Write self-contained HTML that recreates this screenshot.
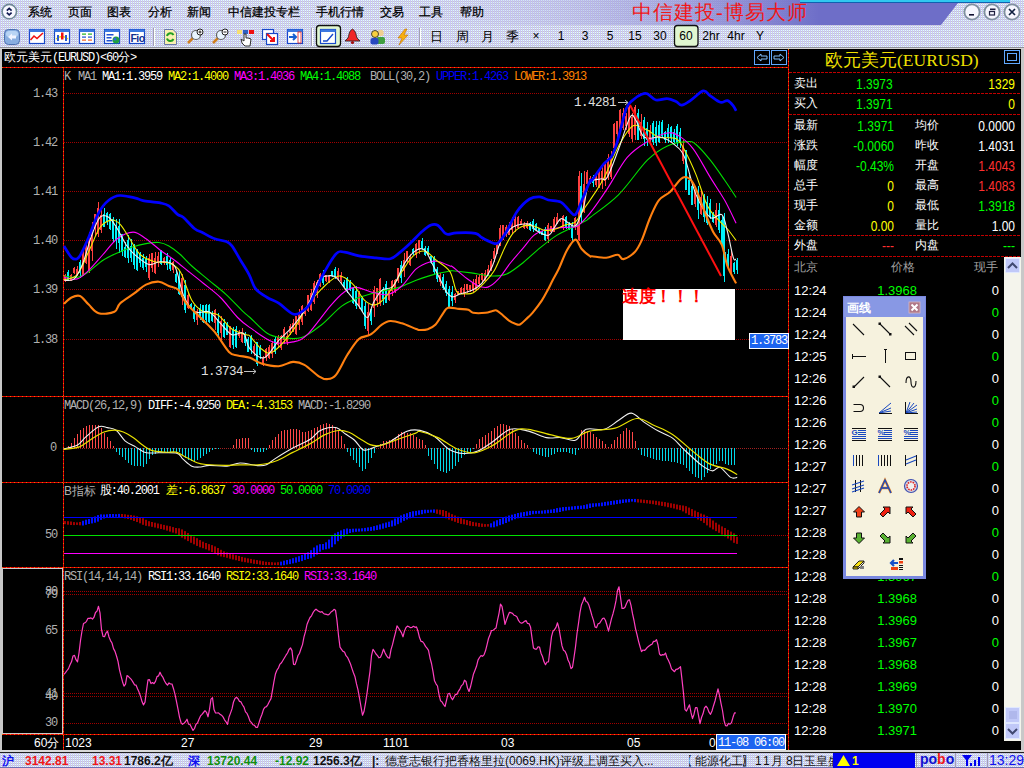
<!DOCTYPE html><html><head><meta charset="utf-8"><style>
*{margin:0;padding:0;box-sizing:border-box}
html,body{width:1024px;height:768px;overflow:hidden;background:#000}
body{position:relative;font-family:"Liberation Sans",sans-serif;font-size:12px;color:#fff}
.a{position:absolute;white-space:nowrap;line-height:1}
.m{font-family:"Liberation Mono",monospace;font-size:12px;letter-spacing:-1.2px}
.s{font-family:"Liberation Sans",sans-serif;font-size:12px}
#menubar{position:absolute;left:0;top:0;width:1024px;height:25px;
 background:linear-gradient(90deg,#d4d4f0 0px,#d4d4f0 400px,#a8a8e0 560px,#8080cc 760px,#7272c4 940px);}
#tb{position:absolute;left:0;top:25px;width:1024px;height:22px;background:#d6d6f2}
</style></head><body>
<svg class="a" style="left:0;top:0" width="1024" height="49"><defs><pattern id="dl" width="2" height="2" patternUnits="userSpaceOnUse"><rect width="2" height="2" fill="#cccaf6"/><rect x="1" y="0" width="1" height="1" fill="#e4fcfc"/><rect x="1" y="1" width="1" height="1" fill="#c4c4cc"/></pattern><pattern id="dk" width="2" height="2" patternUnits="userSpaceOnUse"><rect width="2" height="2" fill="#6e6ec8"/><rect x="1" y="1" width="1" height="1" fill="#5a8cb8"/></pattern><linearGradient id="mg" x1="0" x2="1"><stop offset="0" stop-color="#d2d2f2" stop-opacity="0"/><stop offset="0.38" stop-color="#d2d2f2" stop-opacity="0"/><stop offset="0.8" stop-color="#6e6ec8" stop-opacity="1"/><stop offset="1" stop-color="#6e6ec8" stop-opacity="1"/></linearGradient></defs><rect x="0" y="0" width="1024" height="49" fill="url(#dl)"/><rect x="0" y="0" width="1024" height="25" fill="url(#mg)"/><polygon points="958,3 1010,3 1010,0 1024,0 1024,25 941,25" fill="url(#dl)"/><rect x="800" y="0" width="210" height="2" fill="#30c8f0"/><rect x="800" y="2" width="210" height="1" fill="#1060b0"/><rect x="0" y="47" width="1024" height="1" fill="#909098"/><rect x="0" y="48" width="1024" height="1" fill="#d4d4d4"/></svg>
<div class="a" style="left:28px;top:6px;font-size:12px;color:#000;-webkit-text-stroke:0.25px #000">系统</div>
<div class="a" style="left:68px;top:6px;font-size:12px;color:#000;-webkit-text-stroke:0.25px #000">页面</div>
<div class="a" style="left:107px;top:6px;font-size:12px;color:#000;-webkit-text-stroke:0.25px #000">图表</div>
<div class="a" style="left:148px;top:6px;font-size:12px;color:#000;-webkit-text-stroke:0.25px #000">分析</div>
<div class="a" style="left:187px;top:6px;font-size:12px;color:#000;-webkit-text-stroke:0.25px #000">新闻</div>
<div class="a" style="left:228px;top:6px;font-size:12px;color:#000;-webkit-text-stroke:0.25px #000">中信建投专栏</div>
<div class="a" style="left:316px;top:6px;font-size:12px;color:#000;-webkit-text-stroke:0.25px #000">手机行情</div>
<div class="a" style="left:380px;top:6px;font-size:12px;color:#000;-webkit-text-stroke:0.25px #000">交易</div>
<div class="a" style="left:419px;top:6px;font-size:12px;color:#000;-webkit-text-stroke:0.25px #000">工具</div>
<div class="a" style="left:460px;top:6px;font-size:12px;color:#000;-webkit-text-stroke:0.25px #000">帮助</div>
<div class="a" style="left:632px;top:2px;font-size:20px;color:#f01818;font-family:'Liberation Serif',serif;letter-spacing:1px">中信建投-博易大师</div>
<svg class="a" style="left:0;top:0" width="24" height="24"><circle cx="9.3" cy="11.6" r="7.2" fill="#f8f8ff" stroke="#708898" stroke-width="1.6"/><path d="M6.8,10.6 L9.2,8.4 L11.6,10.6 M6.8,12.6 L9.2,14.8 L11.6,12.6" stroke="#101850" stroke-width="1.7" fill="none"/></svg>
<svg class="a" style="left:0;top:0" width="1024" height="25"><circle cx="972" cy="12" r="7.6" fill="#f6f6fe" stroke="#8090a0" stroke-width="1.8"/><circle cx="992" cy="12" r="7.6" fill="#f6f6fe" stroke="#8090a0" stroke-width="1.8"/><circle cx="1012" cy="12" r="7.6" fill="#f6f6fe" stroke="#8090a0" stroke-width="1.8"/><rect x="969" y="14" width="5" height="1.6" fill="#101030"/><rect x="989.5" y="11.5" width="5" height="3.5" fill="none" stroke="#202040" stroke-width="1.2"/><rect x="990" y="8.5" width="5.5" height="1.6" fill="#202040"/><path d="M1009,9 L1015,15 M1015,9 L1009,15" stroke="#102040" stroke-width="1.7"/></svg>
<svg class="a" style="left:0;top:1px" width="1024" height="48"><g transform="translate(4,28)"><rect x="0.5" y="0.5" width="15" height="15" rx="4" fill="#88aee0" stroke="#4c70b0"/><rect x="2" y="2" width="12" height="6" rx="3" fill="#b8d4f4"/><path d="M4,8 L8,4.5 L8,6.5 L12,6.5 L12,9.5 L8,9.5 L8,11.5 Z" fill="#f0f4ff"/></g><g transform="translate(29,28)"><rect x="0.5" y="0.5" width="15" height="14" fill="#fff" stroke="#1848c8" stroke-width="1.2"/><rect x="0.5" y="0.5" width="15" height="2.5" fill="#3c78e0"/><path d="M1.5,11 L5,7 L8,9.5 L14,4" stroke="#f01010" stroke-width="1.6" fill="none"/></g><g transform="translate(54,28)"><rect x="0.5" y="0.5" width="15" height="14" fill="#fff" stroke="#1848c8" stroke-width="1.2"/><rect x="0.5" y="0.5" width="15" height="2.5" fill="#3c78e0"/><path d="M2,10 Q8,5 14,10" stroke="#f0e000" stroke-width="1.3" fill="none"/><rect x="3" y="6" width="2" height="6" fill="#2c5cd0"/><rect x="7" y="3.5" width="2.5" height="7" fill="#f01010"/><rect x="11" y="6" width="2" height="6" fill="#2c5cd0"/></g><g transform="translate(79,28)"><rect x="0.5" y="0.5" width="15" height="14" fill="#fff" stroke="#1848c8" stroke-width="1.2"/><rect x="0.5" y="0.5" width="15" height="2.5" fill="#3c78e0"/><rect x="3" y="4.5" width="4" height="1.2" fill="#20b020"/><rect x="9" y="4.5" width="4" height="1.2" fill="#20b020"/><rect x="3" y="7.5" width="4" height="1.2" fill="#2050d0"/><rect x="9" y="7.5" width="4" height="1.2" fill="#2050d0"/><rect x="3" y="10.5" width="4" height="1.2" fill="#f06020"/><rect x="9" y="10.5" width="4" height="1.2" fill="#f06020"/></g><g transform="translate(104,28)"><rect x="0.5" y="0.5" width="15" height="14" fill="#fff" stroke="#1848c8" stroke-width="1.2"/><rect x="0.5" y="0.5" width="15" height="2.5" fill="#3c78e0"/><rect x="2.5" y="5" width="7" height="1.5" fill="#2050d0"/><rect x="2.5" y="8" width="5" height="1.5" fill="#2050d0"/><rect x="2.5" y="11" width="6" height="1.5" fill="#2050d0"/><circle cx="12" cy="11" r="3.5" fill="#20a040"/><circle cx="11" cy="10" r="1.5" fill="#3060e0"/></g><g transform="translate(129,28)"><rect x="0.5" y="0.5" width="15" height="14" fill="#fff" stroke="#1848c8" stroke-width="1.2"/><rect x="0.5" y="0.5" width="15" height="2.5" fill="#3c78e0"/><text x="1.5" y="13" font-family="Liberation Sans" font-size="10.5" font-weight="bold" letter-spacing="-0.6" fill="#103090">Fio</text></g><rect x="153" y="27" width="1" height="18" fill="#a0a0b0"/><rect x="154" y="27" width="1" height="18" fill="#ffffff"/><g transform="translate(164,28)"><path d="M0.5,0.5 L9,0.5 L12.5,4 L12.5,15.5 L0.5,15.5 Z" fill="#f8f0b0" stroke="#6878a8"/><path d="M3,7 A3.5,3.5 0 0 1 9.5,6" stroke="#20a020" stroke-width="2" fill="none"/><path d="M9.5,10 A3.5,3.5 0 0 1 3,9.5" stroke="#20a020" stroke-width="2" fill="none"/></g><g transform="translate(187,27)"><path d="M1,15 L6,10" stroke="#d08020" stroke-width="2.5"/><circle cx="9" cy="7" r="4.5" fill="#e8f4ff" stroke="#606060" stroke-width="1.2"/><circle cx="13" cy="4" r="3" fill="#fff" stroke="#202020"/><path d="M11.5,4 L14.5,4 M13,2.5 L13,5.5" stroke="#202020" stroke-width="1"/></g><g transform="translate(212,27)"><path d="M1,15 L6,10" stroke="#d08020" stroke-width="2.5"/><circle cx="9" cy="7" r="4.5" fill="#e8f4ff" stroke="#606060" stroke-width="1.2"/><circle cx="13" cy="4" r="3" fill="#fff" stroke="#202020"/><path d="M11.5,4 L14.5,4" stroke="#202020" stroke-width="1"/></g><g transform="translate(237,27)"><rect x="0" y="2" width="5" height="4" fill="#f8e070"/><rect x="6" y="2" width="5" height="4" fill="#3060c0"/><rect x="12" y="2" width="5" height="4" fill="#f01010"/><path d="M7,6 L7,13 L4,11 L5,15 L8,18 L13,18 L14,11 L11,10 L9,10 L9,6 Z" fill="#fff" stroke="#303030"/></g><g transform="translate(262,28)"><rect x="0.5" y="0.5" width="11" height="10" fill="#fff" stroke="#1848c8" stroke-width="1.2"/><rect x="4.5" y="4.5" width="11" height="11" fill="#fff" stroke="#1848c8" stroke-width="1.2"/><path d="M5,5 L12,12 M8,12 L12,12 L12,8" stroke="#f01010" stroke-width="2" fill="none"/></g><g transform="translate(287,28)"><rect x="0.5" y="0.5" width="15" height="14" fill="#fff" stroke="#1848c8" stroke-width="1.2"/><rect x="0.5" y="0.5" width="15" height="2.5" fill="#3c78e0"/><path d="M2,8 L9,8 M6,5 L9,8 L6,11" stroke="#1860d0" stroke-width="2" fill="none"/><rect x="11" y="3" width="3" height="11" fill="#fff" stroke="#e02020" stroke-width="0.8"/></g><rect x="311" y="27" width="1" height="18" fill="#a0a0b0"/><rect x="312" y="27" width="1" height="18" fill="#ffffff"/><rect x="316.5" y="24.5" width="24" height="21" rx="3" fill="#e0f6d0" stroke="#101010" stroke-width="1.3"/><g transform="translate(320,28)"><rect x="0.5" y="0.5" width="15" height="14" fill="#fff" stroke="#1848c8" stroke-width="1.2"/><rect x="0.5" y="0.5" width="15" height="2.5" fill="#3c78e0"/><path d="M3,12 L7,12 L13,5" stroke="#1848c8" stroke-width="1.4" fill="none"/></g><g transform="translate(345,28)"><path d="M7.5,0 C4,2 4,6 3,9 L0,12 L15,12 L12,9 C11,6 11,2 7.5,0 Z" fill="#f02828" stroke="#202020" stroke-width="0.8"/><circle cx="7.5" cy="13.5" r="1.6" fill="#a01010"/></g><g transform="translate(370,28)"><circle cx="10.5" cy="4" r="3.2" fill="#f0d090"/><rect x="6.5" y="8" width="8.5" height="7" rx="2" fill="#40a040"/><circle cx="5" cy="5" r="3.5" fill="#f8d040" stroke="#202020" stroke-width="0.8"/><rect x="0.5" y="9" width="8" height="6.5" rx="2" fill="#2848c0"/></g><path d="M405,28 L398,37 L402,37 L399,44 L408,34 L404,34 L407,28 Z" fill="#f8b010" stroke="#c07000" stroke-width="0.6"/><rect x="419" y="27" width="1" height="18" fill="#a0a0b0"/><rect x="420" y="27" width="1" height="18" fill="#ffffff"/><rect x="674.5" y="24.5" width="23.5" height="21" rx="3" fill="#e0f6d0" stroke="#101010" stroke-width="1.3"/></svg>
<div class="a" style="left:416px;width:40px;text-align:center;top:30px;font-size:13px;color:#000">日</div>
<div class="a" style="left:442px;width:40px;text-align:center;top:30px;font-size:13px;color:#000">周</div>
<div class="a" style="left:467px;width:40px;text-align:center;top:30px;font-size:13px;color:#000">月</div>
<div class="a" style="left:492px;width:40px;text-align:center;top:30px;font-size:13px;color:#000">季</div>
<div class="a" style="left:516px;width:40px;text-align:center;top:30px;font-size:12px;color:#000">×</div>
<div class="a" style="left:541px;width:40px;text-align:center;top:30px;font-size:12px;color:#000">1</div>
<div class="a" style="left:565px;width:40px;text-align:center;top:30px;font-size:12px;color:#000">3</div>
<div class="a" style="left:590px;width:40px;text-align:center;top:30px;font-size:12px;color:#000">5</div>
<div class="a" style="left:615px;width:40px;text-align:center;top:30px;font-size:12px;color:#000">15</div>
<div class="a" style="left:640px;width:40px;text-align:center;top:30px;font-size:12px;color:#000">30</div>
<div class="a" style="left:666px;width:40px;text-align:center;top:30px;font-size:12px;color:#000">60</div>
<div class="a" style="left:691px;width:40px;text-align:center;top:30px;font-size:12px;color:#000">2hr</div>
<div class="a" style="left:716px;width:40px;text-align:center;top:30px;font-size:12px;color:#000">4hr</div>
<div class="a" style="left:740px;width:40px;text-align:center;top:30px;font-size:12px;color:#000">Y</div>
<svg class="a" style="left:0;top:0" width="1024" height="768"><rect x="0" y="49" width="2" height="703" fill="#c8c8c8"/><rect x="1021" y="49" width="3" height="703" fill="#c8c8c8"/><rect x="0" y="750" width="1024" height="2" fill="#d8d8d8"/><rect x="2" y="67" width="786" height="1" fill="#e00000"/><rect x="2" y="396" width="786" height="1" fill="#e00000"/><rect x="2" y="482" width="786" height="1" fill="#e00000"/><rect x="2" y="567" width="786" height="1" fill="#e00000"/><rect x="2" y="734" width="786" height="1" fill="#e00000"/><rect x="63" y="67" width="1" height="683" fill="#e00000"/><rect x="788" y="49" width="1" height="701" fill="#e00000"/><line x1="2" y1="67.5" x2="788" y2="67.5" stroke="#f07000" stroke-dasharray="1,3"/><line x1="2" y1="396.5" x2="788" y2="396.5" stroke="#f07000" stroke-dasharray="1,3"/><line x1="2" y1="482.5" x2="788" y2="482.5" stroke="#f07000" stroke-dasharray="1,3"/><line x1="2" y1="567.5" x2="788" y2="567.5" stroke="#f07000" stroke-dasharray="1,3"/><line x1="2" y1="734.5" x2="788" y2="734.5" stroke="#f07000" stroke-dasharray="1,3"/><line x1="63.5" y1="67" x2="63.5" y2="750" stroke="#f07000" stroke-dasharray="1,3"/><line x1="788.5" y1="49" x2="788.5" y2="750" stroke="#f07000" stroke-dasharray="1,3"/><line x1="64" y1="93.5" x2="788" y2="93.5" stroke="#a00000" stroke-width="1" stroke-dasharray="1,1"/><line x1="64" y1="142.5" x2="788" y2="142.5" stroke="#a00000" stroke-width="1" stroke-dasharray="1,1"/><line x1="64" y1="191.5" x2="788" y2="191.5" stroke="#a00000" stroke-width="1" stroke-dasharray="1,1"/><line x1="64" y1="240.5" x2="788" y2="240.5" stroke="#a00000" stroke-width="1" stroke-dasharray="1,1"/><line x1="64" y1="289.5" x2="788" y2="289.5" stroke="#a00000" stroke-width="1" stroke-dasharray="1,1"/><line x1="64" y1="339.5" x2="788" y2="339.5" stroke="#a00000" stroke-width="1" stroke-dasharray="1,1"/><line x1="64" y1="448.5" x2="788" y2="448.5" stroke="#a02020" stroke-width="1" stroke-dasharray="1,1"/><line x1="737" y1="535.5" x2="788" y2="535.5" stroke="#a00000" stroke-width="1" stroke-dasharray="1,1"/><line x1="64" y1="591.5" x2="788" y2="591.5" stroke="#a00000" stroke-width="1" stroke-dasharray="1,1"/><line x1="64" y1="594.5" x2="788" y2="594.5" stroke="#a00000" stroke-width="1" stroke-dasharray="1,1"/><line x1="64" y1="630.5" x2="788" y2="630.5" stroke="#a00000" stroke-width="1" stroke-dasharray="1,1"/><line x1="64" y1="693.5" x2="788" y2="693.5" stroke="#a00000" stroke-width="1" stroke-dasharray="1,1"/><line x1="64" y1="696.5" x2="788" y2="696.5" stroke="#a00000" stroke-width="1" stroke-dasharray="1,1"/><line x1="64" y1="723.5" x2="788" y2="723.5" stroke="#a00000" stroke-width="1" stroke-dasharray="1,1"/><rect x="2" y="568" width="60" height="165" fill="none" stroke="#c8c8c8" stroke-width="1" transform="translate(0.5,0.5)"/><line x1="789" y1="72.5" x2="1021" y2="72.5" stroke="#c00000" stroke-dasharray="3,1"/><line x1="789" y1="93.5" x2="1021" y2="93.5" stroke="#c00000" stroke-dasharray="3,1"/><line x1="789" y1="114.5" x2="1021" y2="114.5" stroke="#c00000" stroke-dasharray="3,1"/><line x1="789" y1="235.5" x2="1021" y2="235.5" stroke="#c00000" stroke-dasharray="3,1"/><line x1="789" y1="256.5" x2="1021" y2="256.5" stroke="#c00000" stroke-dasharray="3,1"/><rect x="65" y="274" width="1" height="8" fill="#ff4040"/><rect x="64" y="275" width="2" height="6" fill="#ff4040"/><rect x="68" y="270" width="1" height="10" fill="#00f0f8"/><rect x="67" y="272" width="2" height="8" fill="#00f0f8"/><rect x="71" y="274" width="1" height="7" fill="#ff4040"/><rect x="70" y="275" width="2" height="6" fill="#ff4040"/><rect x="74" y="267" width="1" height="7" fill="#ff4040"/><rect x="73" y="268" width="2" height="5" fill="#ff4040"/><rect x="77" y="266" width="1" height="10" fill="#ff4040"/><rect x="76" y="269" width="2" height="6" fill="#ff4040"/><rect x="80" y="260" width="1" height="18" fill="#00f0f8"/><rect x="79" y="262" width="2" height="11" fill="#00f0f8"/><rect x="83" y="249" width="1" height="27" fill="#ff4040"/><rect x="82" y="252" width="2" height="23" fill="#ff4040"/><rect x="86" y="240" width="1" height="24" fill="#ff4040"/><rect x="85" y="246" width="2" height="17" fill="#ff4040"/><rect x="89" y="232" width="1" height="41" fill="#ff4040"/><rect x="88" y="237" width="2" height="33" fill="#ff4040"/><rect x="92" y="222" width="1" height="39" fill="#ff4040"/><rect x="91" y="233" width="2" height="18" fill="#ff4040"/><rect x="95" y="214" width="1" height="22" fill="#ff4040"/><rect x="94" y="214" width="2" height="15" fill="#ff4040"/><rect x="98" y="202" width="1" height="35" fill="#ff4040"/><rect x="97" y="208" width="2" height="26" fill="#ff4040"/><rect x="101" y="210" width="1" height="23" fill="#ff4040"/><rect x="100" y="215" width="2" height="15" fill="#ff4040"/><rect x="104" y="208" width="1" height="19" fill="#00f0f8"/><rect x="103" y="214" width="2" height="13" fill="#00f0f8"/><rect x="107" y="212" width="1" height="13" fill="#00f0f8"/><rect x="106" y="213" width="2" height="9" fill="#00f0f8"/><rect x="110" y="213" width="1" height="17" fill="#00f0f8"/><rect x="109" y="214" width="2" height="15" fill="#00f0f8"/><rect x="113" y="217" width="1" height="25" fill="#00f0f8"/><rect x="112" y="219" width="2" height="20" fill="#00f0f8"/><rect x="116" y="219" width="1" height="30" fill="#00f0f8"/><rect x="115" y="227" width="2" height="13" fill="#00f0f8"/><rect x="119" y="219" width="1" height="34" fill="#00f0f8"/><rect x="118" y="226" width="2" height="17" fill="#00f0f8"/><rect x="122" y="234" width="1" height="22" fill="#00f0f8"/><rect x="121" y="234" width="2" height="18" fill="#00f0f8"/><rect x="125" y="242" width="1" height="16" fill="#00f0f8"/><rect x="124" y="247" width="2" height="10" fill="#00f0f8"/><rect x="128" y="235" width="1" height="28" fill="#00f0f8"/><rect x="127" y="240" width="2" height="18" fill="#00f0f8"/><rect x="131" y="239" width="1" height="23" fill="#00f0f8"/><rect x="130" y="246" width="2" height="12" fill="#00f0f8"/><rect x="134" y="244" width="1" height="25" fill="#00f0f8"/><rect x="133" y="245" width="2" height="20" fill="#00f0f8"/><rect x="137" y="249" width="1" height="22" fill="#00f0f8"/><rect x="136" y="250" width="2" height="20" fill="#00f0f8"/><rect x="140" y="252" width="1" height="15" fill="#00f0f8"/><rect x="139" y="254" width="2" height="9" fill="#00f0f8"/><rect x="143" y="254" width="1" height="16" fill="#00f0f8"/><rect x="142" y="258" width="2" height="10" fill="#00f0f8"/><rect x="146" y="256" width="1" height="16" fill="#00f0f8"/><rect x="145" y="259" width="2" height="8" fill="#00f0f8"/><rect x="149" y="254" width="1" height="26" fill="#ff4040"/><rect x="148" y="258" width="2" height="20" fill="#ff4040"/><rect x="152" y="253" width="1" height="19" fill="#ff4040"/><rect x="151" y="253" width="2" height="15" fill="#ff4040"/><rect x="155" y="252" width="1" height="22" fill="#ff4040"/><rect x="154" y="258" width="2" height="15" fill="#ff4040"/><rect x="158" y="252" width="1" height="15" fill="#ff4040"/><rect x="157" y="256" width="2" height="7" fill="#ff4040"/><rect x="161" y="250" width="1" height="15" fill="#00f0f8"/><rect x="160" y="251" width="2" height="13" fill="#00f0f8"/><rect x="164" y="257" width="1" height="8" fill="#ff4040"/><rect x="163" y="258" width="2" height="5" fill="#ff4040"/><rect x="167" y="253" width="1" height="17" fill="#00f0f8"/><rect x="166" y="256" width="2" height="9" fill="#00f0f8"/><rect x="170" y="258" width="1" height="13" fill="#00f0f8"/><rect x="169" y="260" width="2" height="9" fill="#00f0f8"/><rect x="173" y="261" width="1" height="12" fill="#ff4040"/><rect x="172" y="262" width="2" height="8" fill="#ff4040"/><rect x="176" y="271" width="1" height="12" fill="#00f0f8"/><rect x="175" y="274" width="2" height="8" fill="#00f0f8"/><rect x="179" y="271" width="1" height="24" fill="#00f0f8"/><rect x="178" y="277" width="2" height="17" fill="#00f0f8"/><rect x="182" y="274" width="1" height="31" fill="#ff4040"/><rect x="181" y="278" width="2" height="19" fill="#ff4040"/><rect x="185" y="280" width="1" height="33" fill="#00f0f8"/><rect x="184" y="285" width="2" height="25" fill="#00f0f8"/><rect x="188" y="293" width="1" height="16" fill="#ff4040"/><rect x="187" y="295" width="2" height="13" fill="#ff4040"/><rect x="191" y="303" width="1" height="7" fill="#00f0f8"/><rect x="190" y="304" width="2" height="5" fill="#00f0f8"/><rect x="194" y="305" width="1" height="17" fill="#00f0f8"/><rect x="193" y="307" width="2" height="12" fill="#00f0f8"/><rect x="197" y="309" width="1" height="16" fill="#ff4040"/><rect x="196" y="311" width="2" height="9" fill="#ff4040"/><rect x="200" y="304" width="1" height="16" fill="#00f0f8"/><rect x="199" y="308" width="2" height="9" fill="#00f0f8"/><rect x="203" y="305" width="1" height="18" fill="#00f0f8"/><rect x="202" y="305" width="2" height="17" fill="#00f0f8"/><rect x="206" y="304" width="1" height="19" fill="#00f0f8"/><rect x="205" y="305" width="2" height="15" fill="#00f0f8"/><rect x="209" y="304" width="1" height="19" fill="#00f0f8"/><rect x="208" y="305" width="2" height="17" fill="#00f0f8"/><rect x="212" y="311" width="1" height="11" fill="#00f0f8"/><rect x="211" y="314" width="2" height="7" fill="#00f0f8"/><rect x="215" y="309" width="1" height="21" fill="#ff4040"/><rect x="214" y="310" width="2" height="13" fill="#ff4040"/><rect x="218" y="313" width="1" height="23" fill="#00f0f8"/><rect x="217" y="319" width="2" height="14" fill="#00f0f8"/><rect x="221" y="316" width="1" height="24" fill="#ff4040"/><rect x="220" y="321" width="2" height="12" fill="#ff4040"/><rect x="224" y="319" width="1" height="19" fill="#00f0f8"/><rect x="223" y="323" width="2" height="14" fill="#00f0f8"/><rect x="227" y="322" width="1" height="13" fill="#00f0f8"/><rect x="226" y="324" width="2" height="11" fill="#00f0f8"/><rect x="230" y="326" width="1" height="22" fill="#ff4040"/><rect x="229" y="326" width="2" height="21" fill="#ff4040"/><rect x="233" y="327" width="1" height="22" fill="#00f0f8"/><rect x="232" y="330" width="2" height="15" fill="#00f0f8"/><rect x="236" y="326" width="1" height="22" fill="#00f0f8"/><rect x="235" y="329" width="2" height="18" fill="#00f0f8"/><rect x="239" y="330" width="1" height="8" fill="#ff4040"/><rect x="238" y="332" width="2" height="4" fill="#ff4040"/><rect x="242" y="328" width="1" height="15" fill="#ff4040"/><rect x="241" y="332" width="2" height="10" fill="#ff4040"/><rect x="245" y="332" width="1" height="14" fill="#00f0f8"/><rect x="244" y="336" width="2" height="7" fill="#00f0f8"/><rect x="248" y="337" width="1" height="15" fill="#00f0f8"/><rect x="247" y="339" width="2" height="13" fill="#00f0f8"/><rect x="251" y="335" width="1" height="19" fill="#00f0f8"/><rect x="250" y="337" width="2" height="13" fill="#00f0f8"/><rect x="254" y="344" width="1" height="12" fill="#ff4040"/><rect x="253" y="346" width="2" height="7" fill="#ff4040"/><rect x="257" y="342" width="1" height="24" fill="#00f0f8"/><rect x="256" y="342" width="2" height="22" fill="#00f0f8"/><rect x="260" y="345" width="1" height="14" fill="#00f0f8"/><rect x="259" y="347" width="2" height="8" fill="#00f0f8"/><rect x="263" y="356" width="1" height="10" fill="#ff4040"/><rect x="262" y="358" width="2" height="7" fill="#ff4040"/><rect x="266" y="348" width="1" height="13" fill="#ff4040"/><rect x="265" y="349" width="2" height="9" fill="#ff4040"/><rect x="269" y="345" width="1" height="14" fill="#ff4040"/><rect x="268" y="347" width="2" height="11" fill="#ff4040"/><rect x="272" y="341" width="1" height="17" fill="#ff4040"/><rect x="271" y="343" width="2" height="11" fill="#ff4040"/><rect x="275" y="337" width="1" height="17" fill="#00f0f8"/><rect x="274" y="339" width="2" height="13" fill="#00f0f8"/><rect x="278" y="335" width="1" height="13" fill="#ff4040"/><rect x="277" y="337" width="2" height="8" fill="#ff4040"/><rect x="281" y="335" width="1" height="15" fill="#ff4040"/><rect x="280" y="336" width="2" height="12" fill="#ff4040"/><rect x="284" y="327" width="1" height="17" fill="#ff4040"/><rect x="283" y="329" width="2" height="11" fill="#ff4040"/><rect x="287" y="333" width="1" height="12" fill="#ff4040"/><rect x="286" y="336" width="2" height="6" fill="#ff4040"/><rect x="290" y="324" width="1" height="11" fill="#ff4040"/><rect x="289" y="326" width="2" height="7" fill="#ff4040"/><rect x="293" y="319" width="1" height="13" fill="#ff4040"/><rect x="292" y="323" width="2" height="9" fill="#ff4040"/><rect x="296" y="316" width="1" height="19" fill="#ff4040"/><rect x="295" y="316" width="2" height="18" fill="#ff4040"/><rect x="299" y="309" width="1" height="21" fill="#ff4040"/><rect x="298" y="314" width="2" height="11" fill="#ff4040"/><rect x="302" y="305" width="1" height="20" fill="#ff4040"/><rect x="301" y="306" width="2" height="16" fill="#ff4040"/><rect x="305" y="308" width="1" height="8" fill="#ff4040"/><rect x="304" y="308" width="2" height="6" fill="#ff4040"/><rect x="308" y="295" width="1" height="17" fill="#ff4040"/><rect x="307" y="295" width="2" height="16" fill="#ff4040"/><rect x="311" y="289" width="1" height="22" fill="#ff4040"/><rect x="310" y="293" width="2" height="17" fill="#ff4040"/><rect x="314" y="281" width="1" height="23" fill="#ff4040"/><rect x="313" y="283" width="2" height="19" fill="#ff4040"/><rect x="317" y="280" width="1" height="18" fill="#ff4040"/><rect x="316" y="282" width="2" height="11" fill="#ff4040"/><rect x="320" y="273" width="1" height="14" fill="#ff4040"/><rect x="319" y="274" width="2" height="12" fill="#ff4040"/><rect x="323" y="270" width="1" height="15" fill="#00f0f8"/><rect x="322" y="274" width="2" height="9" fill="#00f0f8"/><rect x="326" y="275" width="1" height="7" fill="#ff4040"/><rect x="325" y="275" width="2" height="6" fill="#ff4040"/><rect x="329" y="275" width="1" height="8" fill="#ff4040"/><rect x="328" y="276" width="2" height="6" fill="#ff4040"/><rect x="332" y="271" width="1" height="6" fill="#00f0f8"/><rect x="331" y="271" width="2" height="5" fill="#00f0f8"/><rect x="335" y="267" width="1" height="12" fill="#00f0f8"/><rect x="334" y="269" width="2" height="7" fill="#00f0f8"/><rect x="338" y="268" width="1" height="13" fill="#ff4040"/><rect x="337" y="271" width="2" height="7" fill="#ff4040"/><rect x="341" y="272" width="1" height="12" fill="#ff4040"/><rect x="340" y="275" width="2" height="6" fill="#ff4040"/><rect x="344" y="280" width="1" height="7" fill="#00f0f8"/><rect x="343" y="282" width="2" height="4" fill="#00f0f8"/><rect x="347" y="277" width="1" height="16" fill="#00f0f8"/><rect x="346" y="278" width="2" height="13" fill="#00f0f8"/><rect x="350" y="280" width="1" height="11" fill="#00f0f8"/><rect x="349" y="282" width="2" height="8" fill="#00f0f8"/><rect x="353" y="287" width="1" height="17" fill="#00f0f8"/><rect x="352" y="288" width="2" height="15" fill="#00f0f8"/><rect x="356" y="286" width="1" height="23" fill="#00f0f8"/><rect x="355" y="291" width="2" height="15" fill="#00f0f8"/><rect x="359" y="291" width="1" height="18" fill="#ff4040"/><rect x="358" y="293" width="2" height="13" fill="#ff4040"/><rect x="362" y="296" width="1" height="16" fill="#00f0f8"/><rect x="361" y="298" width="2" height="12" fill="#00f0f8"/><rect x="365" y="302" width="1" height="27" fill="#00f0f8"/><rect x="364" y="306" width="2" height="20" fill="#00f0f8"/><rect x="368" y="304" width="1" height="32" fill="#ff4040"/><rect x="367" y="312" width="2" height="19" fill="#ff4040"/><rect x="371" y="309" width="1" height="16" fill="#00f0f8"/><rect x="370" y="309" width="2" height="12" fill="#00f0f8"/><rect x="374" y="286" width="1" height="31" fill="#ff4040"/><rect x="373" y="290" width="2" height="18" fill="#ff4040"/><rect x="377" y="288" width="1" height="19" fill="#ff4040"/><rect x="376" y="288" width="2" height="13" fill="#ff4040"/><rect x="380" y="278" width="1" height="28" fill="#ff4040"/><rect x="379" y="279" width="2" height="25" fill="#ff4040"/><rect x="383" y="287" width="1" height="18" fill="#00f0f8"/><rect x="382" y="289" width="2" height="10" fill="#00f0f8"/><rect x="386" y="281" width="1" height="22" fill="#00f0f8"/><rect x="385" y="284" width="2" height="19" fill="#00f0f8"/><rect x="389" y="288" width="1" height="13" fill="#ff4040"/><rect x="388" y="290" width="2" height="10" fill="#ff4040"/><rect x="392" y="280" width="1" height="16" fill="#ff4040"/><rect x="391" y="281" width="2" height="10" fill="#ff4040"/><rect x="395" y="279" width="1" height="14" fill="#ff4040"/><rect x="394" y="280" width="2" height="11" fill="#ff4040"/><rect x="398" y="268" width="1" height="15" fill="#ff4040"/><rect x="397" y="268" width="2" height="13" fill="#ff4040"/><rect x="401" y="261" width="1" height="22" fill="#00f0f8"/><rect x="400" y="265" width="2" height="13" fill="#00f0f8"/><rect x="404" y="253" width="1" height="24" fill="#ff4040"/><rect x="403" y="260" width="2" height="11" fill="#ff4040"/><rect x="407" y="251" width="1" height="12" fill="#ff4040"/><rect x="406" y="251" width="2" height="10" fill="#ff4040"/><rect x="410" y="254" width="1" height="12" fill="#ff4040"/><rect x="409" y="258" width="2" height="7" fill="#ff4040"/><rect x="413" y="248" width="1" height="7" fill="#00f0f8"/><rect x="412" y="249" width="2" height="4" fill="#00f0f8"/><rect x="416" y="243" width="1" height="15" fill="#ff4040"/><rect x="415" y="244" width="2" height="11" fill="#ff4040"/><rect x="419" y="240" width="1" height="14" fill="#ff4040"/><rect x="418" y="240" width="2" height="10" fill="#ff4040"/><rect x="422" y="238" width="1" height="12" fill="#00f0f8"/><rect x="421" y="241" width="2" height="7" fill="#00f0f8"/><rect x="425" y="246" width="1" height="10" fill="#00f0f8"/><rect x="424" y="248" width="2" height="7" fill="#00f0f8"/><rect x="428" y="246" width="1" height="9" fill="#00f0f8"/><rect x="427" y="248" width="2" height="6" fill="#00f0f8"/><rect x="431" y="256" width="1" height="8" fill="#00f0f8"/><rect x="430" y="256" width="2" height="7" fill="#00f0f8"/><rect x="434" y="256" width="1" height="19" fill="#00f0f8"/><rect x="433" y="258" width="2" height="14" fill="#00f0f8"/><rect x="437" y="267" width="1" height="15" fill="#00f0f8"/><rect x="436" y="269" width="2" height="10" fill="#00f0f8"/><rect x="440" y="273" width="1" height="13" fill="#ff4040"/><rect x="439" y="275" width="2" height="7" fill="#ff4040"/><rect x="443" y="274" width="1" height="16" fill="#00f0f8"/><rect x="442" y="277" width="2" height="11" fill="#00f0f8"/><rect x="446" y="281" width="1" height="15" fill="#00f0f8"/><rect x="445" y="284" width="2" height="9" fill="#00f0f8"/><rect x="449" y="286" width="1" height="22" fill="#00f0f8"/><rect x="448" y="289" width="2" height="19" fill="#00f0f8"/><rect x="452" y="286" width="1" height="20" fill="#00f0f8"/><rect x="451" y="292" width="2" height="9" fill="#00f0f8"/><rect x="455" y="293" width="1" height="10" fill="#ff4040"/><rect x="454" y="294" width="2" height="6" fill="#ff4040"/><rect x="458" y="291" width="1" height="4" fill="#ff4040"/><rect x="457" y="291" width="2" height="4" fill="#ff4040"/><rect x="461" y="287" width="1" height="6" fill="#ff4040"/><rect x="460" y="288" width="2" height="5" fill="#ff4040"/><rect x="464" y="284" width="1" height="13" fill="#ff4040"/><rect x="463" y="288" width="2" height="6" fill="#ff4040"/><rect x="467" y="284" width="1" height="9" fill="#ff4040"/><rect x="466" y="284" width="2" height="6" fill="#ff4040"/><rect x="470" y="285" width="1" height="7" fill="#ff4040"/><rect x="469" y="285" width="2" height="5" fill="#ff4040"/><rect x="473" y="279" width="1" height="14" fill="#ff4040"/><rect x="472" y="283" width="2" height="7" fill="#ff4040"/><rect x="476" y="275" width="1" height="15" fill="#ff4040"/><rect x="475" y="279" width="2" height="11" fill="#ff4040"/><rect x="479" y="274" width="1" height="12" fill="#ff4040"/><rect x="478" y="277" width="2" height="7" fill="#ff4040"/><rect x="482" y="273" width="1" height="10" fill="#ff4040"/><rect x="481" y="273" width="2" height="7" fill="#ff4040"/><rect x="485" y="270" width="1" height="10" fill="#ff4040"/><rect x="484" y="273" width="2" height="8" fill="#ff4040"/><rect x="488" y="265" width="1" height="11" fill="#ff4040"/><rect x="487" y="269" width="2" height="7" fill="#ff4040"/><rect x="491" y="259" width="1" height="12" fill="#ff4040"/><rect x="490" y="261" width="2" height="8" fill="#ff4040"/><rect x="494" y="248" width="1" height="14" fill="#ff4040"/><rect x="493" y="251" width="2" height="8" fill="#ff4040"/><rect x="497" y="242" width="1" height="12" fill="#ff4040"/><rect x="496" y="243" width="2" height="10" fill="#ff4040"/><rect x="500" y="225" width="1" height="21" fill="#ff4040"/><rect x="499" y="228" width="2" height="18" fill="#ff4040"/><rect x="503" y="225" width="1" height="15" fill="#ff4040"/><rect x="502" y="225" width="2" height="12" fill="#ff4040"/><rect x="506" y="225" width="1" height="12" fill="#ff4040"/><rect x="505" y="227" width="2" height="8" fill="#ff4040"/><rect x="509" y="222" width="1" height="13" fill="#ff4040"/><rect x="508" y="225" width="2" height="10" fill="#ff4040"/><rect x="512" y="217" width="1" height="17" fill="#ff4040"/><rect x="511" y="221" width="2" height="9" fill="#ff4040"/><rect x="515" y="215" width="1" height="17" fill="#ff4040"/><rect x="514" y="219" width="2" height="8" fill="#ff4040"/><rect x="518" y="216" width="1" height="13" fill="#ff4040"/><rect x="517" y="217" width="2" height="11" fill="#ff4040"/><rect x="521" y="219" width="1" height="6" fill="#ff4040"/><rect x="520" y="221" width="2" height="4" fill="#ff4040"/><rect x="524" y="222" width="1" height="7" fill="#ff4040"/><rect x="523" y="224" width="2" height="4" fill="#ff4040"/><rect x="527" y="221" width="1" height="8" fill="#ff4040"/><rect x="526" y="223" width="2" height="5" fill="#ff4040"/><rect x="530" y="222" width="1" height="9" fill="#00f0f8"/><rect x="529" y="223" width="2" height="7" fill="#00f0f8"/><rect x="533" y="219" width="1" height="13" fill="#00f0f8"/><rect x="532" y="221" width="2" height="8" fill="#00f0f8"/><rect x="536" y="223" width="1" height="8" fill="#00f0f8"/><rect x="535" y="224" width="2" height="6" fill="#00f0f8"/><rect x="539" y="228" width="1" height="6" fill="#00f0f8"/><rect x="538" y="228" width="2" height="5" fill="#00f0f8"/><rect x="542" y="231" width="1" height="4" fill="#00f0f8"/><rect x="541" y="232" width="2" height="3" fill="#00f0f8"/><rect x="545" y="227" width="1" height="14" fill="#00f0f8"/><rect x="544" y="229" width="2" height="11" fill="#00f0f8"/><rect x="548" y="223" width="1" height="20" fill="#ff4040"/><rect x="547" y="225" width="2" height="14" fill="#ff4040"/><rect x="551" y="226" width="1" height="7" fill="#ff4040"/><rect x="550" y="226" width="2" height="6" fill="#ff4040"/><rect x="554" y="217" width="1" height="15" fill="#ff4040"/><rect x="553" y="219" width="2" height="13" fill="#ff4040"/><rect x="557" y="213" width="1" height="11" fill="#ff4040"/><rect x="556" y="217" width="2" height="7" fill="#ff4040"/><rect x="560" y="219" width="1" height="3" fill="#ff4040"/><rect x="559" y="220" width="2" height="1" fill="#ff4040"/><rect x="563" y="215" width="1" height="15" fill="#ff4040"/><rect x="562" y="216" width="2" height="11" fill="#ff4040"/><rect x="566" y="216" width="1" height="13" fill="#00f0f8"/><rect x="565" y="217" width="2" height="11" fill="#00f0f8"/><rect x="569" y="222" width="1" height="8" fill="#00f0f8"/><rect x="568" y="224" width="2" height="5" fill="#00f0f8"/><rect x="572" y="222" width="1" height="19" fill="#00f0f8"/><rect x="571" y="225" width="2" height="13" fill="#00f0f8"/><rect x="575" y="217" width="1" height="13" fill="#ff4040"/><rect x="574" y="218" width="2" height="9" fill="#ff4040"/><rect x="578" y="216" width="1" height="24" fill="#ff4040"/><rect x="577" y="223" width="2" height="12" fill="#ff4040"/><rect x="581" y="173" width="1" height="50" fill="#00f0f8"/><rect x="580" y="186" width="2" height="31" fill="#00f0f8"/><rect x="584" y="171" width="1" height="42" fill="#ff4040"/><rect x="583" y="184" width="2" height="28" fill="#ff4040"/><rect x="587" y="170" width="1" height="15" fill="#ff4040"/><rect x="586" y="172" width="2" height="12" fill="#ff4040"/><rect x="590" y="176" width="1" height="8" fill="#ff4040"/><rect x="589" y="178" width="2" height="4" fill="#ff4040"/><rect x="593" y="175" width="1" height="12" fill="#00f0f8"/><rect x="592" y="177" width="2" height="6" fill="#00f0f8"/><rect x="596" y="174" width="1" height="13" fill="#ff4040"/><rect x="595" y="177" width="2" height="8" fill="#ff4040"/><rect x="599" y="169" width="1" height="19" fill="#ff4040"/><rect x="598" y="170" width="2" height="18" fill="#ff4040"/><rect x="602" y="165" width="1" height="24" fill="#ff4040"/><rect x="601" y="171" width="2" height="11" fill="#ff4040"/><rect x="605" y="161" width="1" height="25" fill="#ff4040"/><rect x="604" y="163" width="2" height="18" fill="#ff4040"/><rect x="608" y="154" width="1" height="26" fill="#ff4040"/><rect x="607" y="158" width="2" height="18" fill="#ff4040"/><rect x="611" y="151" width="1" height="28" fill="#ff4040"/><rect x="610" y="157" width="2" height="20" fill="#ff4040"/><rect x="614" y="123" width="1" height="32" fill="#ff4040"/><rect x="613" y="124" width="2" height="24" fill="#ff4040"/><rect x="617" y="121" width="1" height="17" fill="#ff4040"/><rect x="616" y="121" width="2" height="13" fill="#ff4040"/><rect x="620" y="109" width="1" height="22" fill="#ff4040"/><rect x="619" y="110" width="2" height="19" fill="#ff4040"/><rect x="623" y="108" width="1" height="22" fill="#ff4040"/><rect x="622" y="113" width="2" height="15" fill="#ff4040"/><rect x="626" y="113" width="1" height="17" fill="#ff4040"/><rect x="625" y="116" width="2" height="10" fill="#ff4040"/><rect x="629" y="106" width="1" height="31" fill="#ff4040"/><rect x="628" y="107" width="2" height="27" fill="#ff4040"/><rect x="632" y="113" width="1" height="29" fill="#ff4040"/><rect x="631" y="117" width="2" height="22" fill="#ff4040"/><rect x="635" y="105" width="1" height="35" fill="#ff4040"/><rect x="634" y="107" width="2" height="28" fill="#ff4040"/><rect x="638" y="109" width="1" height="31" fill="#00f0f8"/><rect x="637" y="113" width="2" height="27" fill="#00f0f8"/><rect x="641" y="114" width="1" height="25" fill="#ff4040"/><rect x="640" y="122" width="2" height="14" fill="#ff4040"/><rect x="644" y="117" width="1" height="29" fill="#00f0f8"/><rect x="643" y="120" width="2" height="19" fill="#00f0f8"/><rect x="647" y="122" width="1" height="24" fill="#00f0f8"/><rect x="646" y="128" width="2" height="12" fill="#00f0f8"/><rect x="650" y="125" width="1" height="20" fill="#ff4040"/><rect x="649" y="130" width="2" height="13" fill="#ff4040"/><rect x="653" y="121" width="1" height="24" fill="#00f0f8"/><rect x="652" y="123" width="2" height="19" fill="#00f0f8"/><rect x="656" y="121" width="1" height="25" fill="#00f0f8"/><rect x="655" y="127" width="2" height="16" fill="#00f0f8"/><rect x="659" y="121" width="1" height="22" fill="#00f0f8"/><rect x="658" y="125" width="2" height="17" fill="#00f0f8"/><rect x="662" y="120" width="1" height="18" fill="#00f0f8"/><rect x="661" y="122" width="2" height="14" fill="#00f0f8"/><rect x="665" y="131" width="1" height="12" fill="#00f0f8"/><rect x="664" y="132" width="2" height="8" fill="#00f0f8"/><rect x="668" y="124" width="1" height="19" fill="#00f0f8"/><rect x="667" y="128" width="2" height="10" fill="#00f0f8"/><rect x="671" y="126" width="1" height="16" fill="#00f0f8"/><rect x="670" y="127" width="2" height="11" fill="#00f0f8"/><rect x="674" y="129" width="1" height="15" fill="#00f0f8"/><rect x="673" y="132" width="2" height="10" fill="#00f0f8"/><rect x="677" y="124" width="1" height="22" fill="#00f0f8"/><rect x="676" y="126" width="2" height="17" fill="#00f0f8"/><rect x="680" y="128" width="1" height="20" fill="#00f0f8"/><rect x="679" y="132" width="2" height="11" fill="#00f0f8"/><rect x="683" y="140" width="1" height="24" fill="#ff4040"/><rect x="682" y="147" width="2" height="14" fill="#ff4040"/><rect x="686" y="151" width="1" height="39" fill="#ff4040"/><rect x="685" y="158" width="2" height="20" fill="#ff4040"/><rect x="689" y="175" width="1" height="20" fill="#00f0f8"/><rect x="688" y="180" width="2" height="15" fill="#00f0f8"/><rect x="692" y="181" width="1" height="24" fill="#00f0f8"/><rect x="691" y="186" width="2" height="19" fill="#00f0f8"/><rect x="695" y="186" width="1" height="21" fill="#ff4040"/><rect x="694" y="191" width="2" height="13" fill="#ff4040"/><rect x="698" y="186" width="1" height="33" fill="#00f0f8"/><rect x="697" y="194" width="2" height="16" fill="#00f0f8"/><rect x="701" y="191" width="1" height="24" fill="#ff4040"/><rect x="700" y="197" width="2" height="17" fill="#ff4040"/><rect x="704" y="194" width="1" height="28" fill="#00f0f8"/><rect x="703" y="196" width="2" height="21" fill="#00f0f8"/><rect x="707" y="196" width="1" height="29" fill="#00f0f8"/><rect x="706" y="202" width="2" height="21" fill="#00f0f8"/><rect x="710" y="199" width="1" height="20" fill="#00f0f8"/><rect x="709" y="203" width="2" height="14" fill="#00f0f8"/><rect x="713" y="212" width="1" height="11" fill="#00f0f8"/><rect x="712" y="213" width="2" height="9" fill="#00f0f8"/><rect x="716" y="203" width="1" height="24" fill="#ff4040"/><rect x="715" y="210" width="2" height="15" fill="#ff4040"/><rect x="719" y="203" width="1" height="30" fill="#00f0f8"/><rect x="718" y="210" width="2" height="20" fill="#00f0f8"/><rect x="722" y="216" width="1" height="32" fill="#00f0f8"/><rect x="721" y="220" width="2" height="25" fill="#00f0f8"/><rect x="725" y="252" width="1" height="9" fill="#00f0f8"/><rect x="724" y="253" width="2" height="7" fill="#00f0f8"/><rect x="728" y="249" width="1" height="20" fill="#00f0f8"/><rect x="727" y="254" width="2" height="11" fill="#00f0f8"/><rect x="731" y="251" width="1" height="25" fill="#ff4040"/><rect x="730" y="256" width="2" height="17" fill="#ff4040"/><rect x="734" y="262" width="1" height="12" fill="#00f0f8"/><rect x="733" y="263" width="2" height="9" fill="#00f0f8"/><rect x="737" y="258" width="1" height="16" fill="#00f0f8"/><rect x="736" y="260" width="2" height="10" fill="#00f0f8"/><rect x="579" y="171" width="1" height="70" fill="#ff4040"/><rect x="578" y="176" width="2" height="62" fill="#ff4040"/><rect x="724" y="213" width="1" height="69" fill="#00f0f8"/><rect x="723" y="218" width="2" height="58" fill="#00f0f8"/><rect x="685" y="150" width="2" height="40" fill="#00f0f8"/><path d="M64.3,276.0 C66.5,276.2 73.1,278.1 77.2,277.4 C81.3,276.7 84.4,274.6 88.7,271.7 C93.0,268.8 98.2,263.3 103.0,260.2 C107.8,257.1 112.5,255.2 117.3,253.1 C122.1,250.9 126.8,248.9 131.6,247.3 C136.4,245.7 141.4,244.4 146.0,243.6 C150.6,242.8 155.1,242.1 158.9,242.5 C162.7,242.9 165.3,243.9 168.9,245.9 C172.5,247.9 176.5,251.2 180.3,254.5 C184.1,257.9 187.0,261.7 191.8,266.0 C196.6,270.3 203.3,275.5 209.0,280.3 C214.7,285.1 220.5,289.4 226.2,294.6 C231.9,299.9 239.4,308.0 243.4,311.8 C247.4,315.6 246.0,313.9 250.0,317.5 C254.0,321.1 261.9,329.9 267.2,333.3 C272.4,336.7 275.8,336.9 281.5,337.6 C287.2,338.3 294.9,339.8 301.6,337.6 C308.3,335.5 314.9,329.9 321.6,324.7 C328.3,319.4 335.5,310.6 341.7,306.1 C347.9,301.6 352.7,299.9 358.9,297.5 C365.1,295.1 372.2,293.4 378.9,291.7 C385.6,290.0 392.8,289.3 399.0,287.4 C405.2,285.5 410.5,282.4 416.2,280.3 C421.9,278.2 427.8,276.1 433.4,274.6 C439.0,273.1 446.8,271.7 450.0,271.1 C453.2,270.5 449.0,270.5 452.5,270.8 C456.0,271.1 464.6,272.0 471.2,272.9 C477.9,273.8 486.2,275.8 492.1,276.0 C498.0,276.2 501.5,276.2 506.7,274.0 C511.9,271.8 517.8,266.9 523.3,262.5 C528.8,258.1 534.4,252.4 540.0,247.9 C545.6,243.4 551.5,238.7 556.7,235.4 C561.9,232.1 566.4,230.5 571.2,228.1 C576.1,225.7 582.7,222.6 585.8,220.8 C588.9,219.0 584.5,221.9 590.0,217.5 C595.5,213.1 609.2,204.2 618.7,194.6 C628.2,185.0 639.2,168.3 647.3,160.2 C655.4,152.1 660.7,149.0 667.4,145.9 C674.1,142.8 682.6,141.8 687.4,141.6 C692.2,141.4 692.2,141.4 696.0,144.5 C699.8,147.6 705.5,154.2 710.3,160.2 C715.1,166.2 720.4,174.1 724.7,180.3 C729.0,186.5 734.2,194.6 736.1,197.5" stroke="#00e000" stroke-width="1.1" fill="none" stroke-linejoin="round"/><path d="M64.3,277.4 C66.5,277.6 73.1,280.1 77.2,278.9 C81.3,277.7 84.4,274.4 88.7,270.3 C93.0,266.2 98.2,259.8 103.0,254.5 C107.8,249.2 112.3,242.4 117.3,238.7 C122.3,235.0 128.3,232.1 133.1,232.1 C137.9,232.1 141.5,235.7 146.0,238.7 C150.5,241.7 155.5,246.6 160.3,250.2 C165.1,253.8 169.8,256.6 174.6,260.2 C179.4,263.8 184.1,267.9 188.9,271.7 C193.7,275.5 198.0,278.9 203.3,283.2 C208.6,287.5 214.8,291.8 220.5,297.5 C226.2,303.2 232.7,312.5 237.6,317.5 C242.5,322.5 244.1,323.5 250.0,327.6 C255.9,331.7 265.7,339.5 272.9,341.9 C280.1,344.3 287.3,343.1 293.0,341.9 C298.7,340.7 301.1,340.7 307.3,334.7 C313.5,328.7 324.0,313.3 330.2,306.1 C336.4,298.9 340.3,294.8 344.6,291.7 C348.9,288.6 351.7,287.4 356.0,287.4 C360.3,287.4 365.1,290.5 370.3,291.7 C375.6,292.9 382.2,295.6 387.5,294.6 C392.8,293.7 397.1,290.3 401.9,286.0 C406.7,281.7 411.4,272.9 416.2,268.8 C421.0,264.8 426.7,262.9 430.5,261.7 C434.3,260.5 435.9,261.0 439.1,261.7 C442.4,262.4 447.8,265.2 450.0,266.0 C452.2,266.8 450.0,264.8 452.5,266.7 C455.0,268.6 460.8,274.0 465.0,277.1 C469.2,280.2 473.7,283.7 477.5,285.4 C481.3,287.1 484.4,288.1 487.9,287.1 C491.4,286.1 494.5,283.3 498.3,279.2 C502.1,275.1 506.6,267.7 510.8,262.5 C515.0,257.3 519.5,252.4 523.3,247.9 C527.1,243.4 530.3,238.4 533.8,235.4 C537.2,232.4 540.4,231.4 544.2,230.2 C548.0,229.0 552.5,228.6 556.7,228.1 C560.9,227.6 565.7,227.4 569.2,227.1 C572.7,226.8 574.0,228.3 577.5,226.0 C581.0,223.7 585.0,219.4 590.0,213.2 C595.0,207.0 601.0,198.2 607.2,188.9 C613.4,179.6 620.5,165.3 627.2,157.4 C633.9,149.5 640.6,145.7 647.3,141.6 C654.0,137.5 662.1,133.9 667.4,133.0 C672.6,132.1 674.5,133.3 678.8,135.9 C683.1,138.5 688.0,141.9 693.2,148.8 C698.5,155.7 705.0,168.8 710.3,177.4 C715.5,186.0 720.4,192.7 724.7,200.3 C729.0,208.0 734.2,219.5 736.1,223.3" stroke="#ff00ff" stroke-width="1.1" fill="none" stroke-linejoin="round"/><path d="M64.3,279.7 C66.5,278.9 73.1,279.3 77.2,274.6 C81.3,269.9 84.9,259.5 88.7,251.6 C92.5,243.7 96.3,232.6 100.1,227.3 C103.9,222.1 108.2,220.6 111.6,220.1 C114.9,219.6 117.3,221.5 120.2,224.4 C123.1,227.3 125.5,232.3 128.8,237.3 C132.1,242.3 135.9,250.4 140.2,254.5 C144.5,258.6 149.8,260.3 154.6,261.7 C159.4,263.1 164.6,261.4 168.9,263.1 C173.2,264.8 176.5,265.5 180.3,271.7 C184.1,277.9 188.0,293.6 191.8,300.3 C195.6,307.0 199.0,309.4 203.3,311.8 C207.6,314.2 212.8,311.8 217.6,314.7 C222.4,317.6 227.1,325.7 231.9,329.0 C236.7,332.3 243.2,333.5 246.2,334.7 C249.2,335.9 247.4,333.8 250.0,336.2 C252.6,338.6 257.7,346.4 261.5,349.0 C265.3,351.6 267.6,355.0 272.9,351.9 C278.1,348.8 287.3,338.0 293.0,330.4 C298.7,322.8 302.5,313.0 307.3,306.1 C312.1,299.2 316.4,293.9 321.6,288.9 C326.9,283.9 333.5,276.7 338.8,276.0 C344.1,275.3 348.9,280.6 353.2,284.6 C357.5,288.7 360.8,297.0 364.6,300.3 C368.4,303.6 372.3,305.6 376.1,304.6 C379.9,303.7 383.2,300.1 387.5,294.6 C391.8,289.1 397.6,278.1 401.9,271.7 C406.2,265.2 409.5,259.3 413.3,255.9 C417.1,252.5 421.0,250.4 424.8,251.1 C428.6,251.8 432.0,256.8 436.2,260.2 C440.4,263.6 446.6,266.4 450.0,271.7 C453.4,276.9 454.2,288.0 456.7,291.7 C459.2,295.4 462.2,293.6 465.0,293.8 C467.8,293.9 470.2,294.4 473.3,292.7 C476.4,291.0 480.3,286.9 483.8,283.3 C487.2,279.7 490.7,276.7 494.2,270.8 C497.7,264.9 501.5,254.2 504.6,247.9 C507.7,241.7 509.8,237.0 512.9,233.3 C516.0,229.7 519.8,227.2 523.3,226.0 C526.8,224.8 530.3,225.3 533.8,226.0 C537.2,226.7 540.7,229.7 544.2,230.2 C547.7,230.7 551.1,230.1 554.6,229.2 C558.1,228.3 561.5,226.2 565.0,225.0 C568.5,223.8 571.9,225.0 575.4,221.9 C578.9,218.8 583.4,209.8 585.8,206.2 C588.2,202.7 586.9,205.1 590.0,200.3 C593.1,195.5 599.5,186.5 604.3,177.4 C609.1,168.3 613.9,154.5 618.7,145.9 C623.5,137.3 628.2,128.4 633.0,125.8 C637.8,123.2 643.0,128.2 647.3,130.1 C651.6,132.0 654.0,135.9 658.8,137.3 C663.6,138.7 671.7,136.5 676.0,138.7 C680.3,140.8 681.3,144.2 684.6,150.2 C687.9,156.2 692.2,165.3 696.0,174.6 C699.8,183.9 703.7,198.5 707.5,206.1 C711.3,213.7 715.6,216.6 718.9,220.4 C722.2,224.2 724.6,225.7 727.5,229.0 C730.4,232.3 734.7,238.6 736.1,240.5" stroke="#f0f000" stroke-width="1.1" fill="none" stroke-linejoin="round"/><path d="M64.3,280.3 C66.0,280.1 71.2,281.8 74.3,278.9 C77.4,276.0 80.0,270.3 82.9,263.1 C85.8,255.9 88.6,243.6 91.5,235.9 C94.4,228.2 97.2,220.3 100.1,217.2 C103.0,214.1 105.8,215.3 108.7,217.2 C111.6,219.1 114.4,224.1 117.3,228.7 C120.2,233.2 123.0,240.2 125.9,244.5 C128.8,248.8 130.7,251.2 134.5,254.5 C138.3,257.8 144.5,263.3 148.8,264.5 C153.1,265.7 156.0,261.4 160.3,261.7 C164.6,261.9 170.8,260.5 174.6,266.0 C178.4,271.5 179.8,287.0 183.2,294.6 C186.5,302.2 190.4,308.9 194.7,311.8 C199.0,314.7 204.7,309.9 209.0,311.8 C213.3,313.7 216.7,319.5 220.5,323.3 C224.3,327.1 228.1,333.0 231.9,334.7 C235.7,336.4 240.4,330.9 243.4,333.3 C246.4,335.7 246.5,344.9 250.0,349.0 C253.5,353.1 259.5,359.1 264.3,357.7 C269.1,356.3 273.9,345.8 278.7,340.5 C283.5,335.2 288.2,331.8 293.0,326.1 C297.8,320.4 303.0,313.7 307.3,306.1 C311.6,298.5 315.5,285.3 318.8,280.3 C322.1,275.3 324.5,276.5 327.4,276.0 C330.3,275.5 332.7,274.8 336.0,277.4 C339.3,280.0 343.6,286.9 347.4,291.7 C351.2,296.5 355.5,301.8 358.9,306.1 C362.2,310.4 365.1,318.0 367.5,317.5 C369.9,317.0 370.8,307.7 373.2,303.2 C375.6,298.7 378.4,293.2 381.8,290.3 C385.2,287.4 389.5,290.5 393.3,286.0 C397.1,281.5 400.9,269.1 404.7,263.1 C408.5,257.1 412.8,252.3 416.2,250.2 C419.6,248.0 421.9,247.6 424.8,250.2 C427.7,252.8 430.1,259.6 433.4,266.0 C436.7,272.4 442.7,284.6 444.8,288.9 C446.9,293.2 445.0,290.4 446.2,291.7 C447.5,293.0 450.1,296.6 452.5,296.9 C454.9,297.2 457.7,294.8 460.8,293.8 C463.9,292.7 467.8,292.3 471.2,290.6 C474.7,288.9 478.2,287.3 481.7,283.3 C485.2,279.3 489.0,273.6 492.1,266.7 C495.2,259.8 498.0,247.3 500.4,241.7 C502.8,236.1 504.6,235.7 506.7,233.3 C508.8,230.9 510.1,228.7 512.9,227.1 C515.7,225.5 520.2,224.3 523.3,224.0 C526.4,223.7 529.6,224.0 531.7,225.0 C533.8,226.0 533.0,228.5 535.8,230.2 C538.6,231.9 545.2,235.9 548.3,235.4 C551.4,234.9 552.5,229.9 554.6,227.1 C556.7,224.3 558.7,219.6 560.8,218.8 C562.9,217.9 565.0,220.7 567.1,221.9 C569.2,223.1 571.6,225.8 573.3,226.0 C575.0,226.2 575.8,226.2 577.5,222.9 C579.2,219.6 581.8,212.9 583.8,206.2 C585.7,199.6 586.2,187.8 589.0,183.2 C591.8,178.6 597.5,179.9 600.5,178.9 C603.5,177.9 604.2,182.4 607.2,177.4 C610.2,172.4 614.9,158.8 618.7,148.8 C622.5,138.8 627.2,122.0 630.1,117.2 C633.0,112.4 633.4,116.8 635.8,120.1 C638.2,123.4 640.1,134.4 644.4,137.3 C648.7,140.2 656.3,135.9 661.6,137.3 C666.9,138.7 672.2,142.6 676.0,145.9 C679.8,149.2 681.3,149.3 684.6,157.4 C687.9,165.5 691.7,184.6 696.0,194.6 C700.3,204.6 706.0,214.2 710.3,217.5 C714.6,220.8 718.9,212.3 721.8,214.7 C724.7,217.1 725.6,224.7 727.5,231.9 C729.4,239.1 731.9,253.2 733.3,257.7 C734.7,262.2 735.6,258.9 736.1,259.1" stroke="#f0f0f0" stroke-width="1.1" fill="none" stroke-linejoin="round"/><path d="M64.0,246.0 C65.2,247.9 69.3,255.3 71.5,257.4 C73.7,259.5 75.5,259.5 77.2,258.8 C78.9,258.1 79.6,256.6 81.5,253.0 C83.4,249.4 86.1,243.5 88.7,237.3 C91.3,231.1 94.4,221.5 97.2,215.8 C100.0,210.1 102.5,206.2 105.8,202.9 C109.1,199.6 113.5,196.9 117.3,195.8 C121.1,194.8 125.5,196.1 128.8,196.6 C132.2,197.1 135.0,197.9 137.4,198.6 C139.8,199.3 139.2,199.9 143.0,200.6 C146.8,201.3 156.0,202.0 160.3,202.9 C164.6,203.8 166.0,203.9 168.9,205.8 C171.8,207.7 175.1,212.5 177.5,214.4 C179.9,216.3 180.3,214.8 183.2,217.2 C186.1,219.6 191.3,226.1 194.7,228.7 C198.0,231.3 200.0,231.3 203.3,233.0 C206.6,234.7 210.9,237.3 214.7,238.7 C218.5,240.1 223.3,240.4 226.2,241.6 C229.1,242.8 229.5,242.8 231.9,245.9 C234.3,249.0 237.6,255.4 240.5,260.2 C243.4,265.0 246.6,269.8 249.1,274.6 C251.6,279.4 252.7,285.1 255.7,288.9 C258.7,292.7 263.4,295.1 267.2,297.5 C271.0,299.9 274.4,300.4 278.7,303.2 C283.0,306.0 289.2,312.7 293.0,314.1 C296.8,315.5 298.7,313.6 301.6,311.8 C304.5,310.0 306.9,308.9 310.2,303.2 C313.5,297.5 317.3,285.6 321.6,277.4 C325.9,269.2 332.2,258.1 336.0,253.9 C339.8,249.7 340.8,251.9 344.6,252.2 C348.4,252.5 353.6,255.0 358.9,255.9 C364.1,256.9 370.9,257.4 376.1,257.9 C381.4,258.4 386.6,259.6 390.4,258.8 C394.2,258.0 395.6,255.7 399.0,253.1 C402.4,250.5 406.7,246.6 410.5,243.0 C414.3,239.4 418.7,234.5 422.0,231.6 C425.3,228.7 427.9,226.4 430.5,225.3 C433.1,224.2 435.3,224.0 437.7,225.3 C440.1,226.6 443.0,231.5 444.8,233.0 C446.6,234.5 446.3,234.4 448.3,234.4 C450.3,234.4 452.2,233.1 456.7,232.9 C461.2,232.7 471.2,232.5 475.4,233.3 C479.6,234.1 478.9,235.9 481.7,237.5 C484.5,239.1 489.3,241.8 492.1,242.7 C494.9,243.6 495.9,244.6 498.3,242.7 C500.7,240.8 503.6,236.4 506.7,231.2 C509.8,226.1 513.3,216.9 517.1,211.5 C520.9,206.1 525.8,201.4 529.6,199.0 C533.4,196.6 536.9,196.7 540.0,196.9 C543.1,197.1 544.8,199.1 548.3,200.0 C551.8,200.9 557.3,200.4 560.8,202.1 C564.3,203.8 566.8,208.3 569.2,210.4 C571.6,212.5 573.3,216.2 575.4,214.6 C577.5,213.0 579.3,206.6 581.7,201.0 C584.1,195.4 588.3,184.7 590.0,181.2 C591.7,177.8 589.7,183.1 591.9,180.3 C594.1,177.5 600.0,168.6 603.3,164.5 C606.6,160.4 609.5,160.0 611.9,155.9 C614.3,151.8 615.3,148.1 617.7,140.2 C620.1,132.3 623.7,115.4 626.2,108.7 C628.8,102.0 630.4,102.4 633.0,100.0 C635.6,97.6 639.2,95.3 641.6,94.3 C644.0,93.3 644.9,92.8 647.3,93.8 C649.7,94.8 652.5,99.2 655.9,100.0 C659.2,100.8 664.0,98.3 667.4,98.6 C670.8,98.8 673.6,100.4 676.0,101.5 C678.4,102.6 679.3,105.4 681.7,105.2 C684.1,105.0 686.7,103.0 690.3,100.6 C693.9,98.2 699.9,91.7 703.2,90.9 C706.5,90.1 707.4,93.9 710.3,95.8 C713.2,97.7 717.5,101.5 720.4,102.3 C723.3,103.1 725.4,100.0 727.5,100.6 C729.6,101.2 731.9,104.1 733.3,105.8 C734.7,107.5 735.6,110.1 736.1,110.9" stroke="#0000ff" stroke-width="2.7" fill="none" stroke-linejoin="round"/><path d="M64.0,303.8 C65.2,302.8 68.8,298.8 71.5,297.5 C74.2,296.2 77.1,294.8 80.0,296.0 C82.9,297.2 85.6,301.7 88.7,304.6 C91.8,307.5 94.4,312.0 98.7,313.2 C103.0,314.4 110.8,313.5 114.4,311.8 C118.0,310.1 116.9,306.3 120.2,303.2 C123.5,300.1 130.2,296.3 134.5,293.2 C138.8,290.1 141.9,286.5 146.0,284.6 C150.1,282.7 155.1,281.5 158.9,281.7 C162.7,281.9 165.6,284.6 168.9,286.0 C172.2,287.4 176.0,287.4 178.9,290.3 C181.8,293.2 182.5,298.7 186.1,303.2 C189.7,307.7 195.6,312.7 200.4,317.5 C205.2,322.3 209.9,326.2 214.7,331.9 C219.5,337.6 225.2,348.0 229.0,351.9 C232.8,355.8 234.1,354.4 237.6,355.4 C241.1,356.4 246.0,356.4 250.0,357.7 C254.0,359.0 256.7,362.0 261.5,363.4 C266.3,364.8 273.4,366.4 278.7,366.2 C283.9,365.9 288.7,362.1 293.0,361.9 C297.3,361.7 300.1,362.4 304.4,364.8 C308.7,367.2 315.0,373.9 318.8,376.3 C322.6,378.7 324.5,379.4 327.4,379.1 C330.3,378.9 332.7,378.9 336.0,374.8 C339.3,370.8 343.6,360.8 347.4,354.8 C351.2,348.8 355.1,342.4 358.9,339.0 C362.7,335.6 366.5,337.1 370.3,334.7 C374.1,332.3 378.5,327.0 381.8,324.7 C385.1,322.4 387.0,321.2 390.4,321.0 C393.8,320.8 397.6,322.0 401.9,323.3 C406.2,324.6 413.2,327.9 416.2,329.0 C419.2,330.1 418.1,330.0 420.0,330.0 C421.9,330.0 425.2,330.1 427.8,329.2 C430.4,328.3 433.0,327.2 435.6,324.5 C438.2,321.8 441.3,315.6 443.4,312.8 C445.5,310.0 445.5,308.5 448.1,307.8 C450.7,307.1 455.6,308.6 459.0,308.9 C462.4,309.2 466.0,309.0 468.4,309.7 C470.8,310.4 470.2,312.3 473.1,312.8 C476.0,313.3 482.5,313.1 485.6,312.8 C488.7,312.5 490.1,311.6 491.9,311.2 C493.7,310.9 494.8,309.8 496.6,310.5 C498.4,311.2 500.7,313.5 502.8,315.2 C504.9,316.9 506.9,319.2 509.0,320.6 C511.1,322.0 513.5,323.1 515.3,323.8 C517.1,324.4 518.2,325.3 520.0,324.5 C521.8,323.7 524.2,320.9 526.2,319.0 C528.3,317.1 529.9,315.9 532.5,312.8 C535.1,309.7 539.3,304.2 541.9,300.3 C544.5,296.4 546.3,292.8 548.1,289.4 C549.9,286.0 551.0,283.4 552.8,280.0 C554.6,276.6 556.4,273.8 558.8,268.8 C561.1,263.8 564.3,254.9 567.1,250.0 C569.9,245.1 573.0,239.8 575.4,239.6 C577.8,239.4 579.3,246.2 581.7,249.0 C584.1,251.8 588.3,255.1 590.0,256.2 C591.7,257.4 589.2,256.0 591.9,256.2 C594.6,256.4 601.9,257.9 606.2,257.7 C610.5,257.5 614.8,254.6 617.7,254.8 C620.6,255.0 620.5,259.6 623.4,259.1 C626.2,258.6 631.8,255.1 634.8,252.0 C637.8,248.9 639.0,246.2 641.6,240.5 C644.2,234.8 647.3,224.2 650.2,217.5 C653.1,210.8 655.5,204.6 658.8,200.3 C662.1,196.0 666.2,195.5 670.2,191.7 C674.2,187.9 679.3,178.8 683.1,177.4 C686.9,176.0 689.6,177.5 693.2,183.2 C696.8,188.9 701.3,203.7 704.6,211.8 C707.9,219.9 710.3,226.4 713.2,231.9 C716.1,237.4 719.4,239.1 721.8,244.8 C724.2,250.5 725.1,259.8 727.5,266.2 C729.9,272.6 734.7,280.5 736.1,283.4" stroke="#ff8010" stroke-width="2.1" fill="none" stroke-linejoin="round"/><line x1="630" y1="105" x2="721" y2="276" stroke="#ff1010" stroke-width="2"/><path d="M618,102.5 L628,102.5 M625,100 L628,102.5 L625,105" stroke="#c0c0c0" stroke-width="1" fill="none"/><path d="M244,371.5 L256,371.5 M253,369 L256,371.5 L253,374" stroke="#c0c0c0" stroke-width="1" fill="none"/><rect x="68" y="446" width="1" height="2" fill="#ff4848"/><rect x="71" y="443" width="1" height="5" fill="#ff4848"/><rect x="74" y="438" width="1" height="10" fill="#ff4848"/><rect x="77" y="434" width="1" height="14" fill="#ff4848"/><rect x="80" y="430" width="1" height="18" fill="#ff4848"/><rect x="83" y="428" width="1" height="20" fill="#ff4848"/><rect x="86" y="426" width="1" height="22" fill="#ff4848"/><rect x="89" y="425" width="1" height="23" fill="#ff4848"/><rect x="92" y="425" width="1" height="23" fill="#ff4848"/><rect x="95" y="425" width="1" height="23" fill="#ff4848"/><rect x="98" y="425" width="1" height="23" fill="#ff4848"/><rect x="101" y="428" width="1" height="20" fill="#ff4848"/><rect x="104" y="433" width="1" height="15" fill="#ff4848"/><rect x="107" y="437" width="1" height="11" fill="#ff4848"/><rect x="110" y="441" width="1" height="7" fill="#ff4848"/><rect x="113" y="446" width="1" height="2" fill="#ff4848"/><rect x="116" y="448" width="1" height="4" fill="#00d8e8"/><rect x="119" y="448" width="1" height="7" fill="#00d8e8"/><rect x="122" y="448" width="1" height="9" fill="#00d8e8"/><rect x="125" y="448" width="1" height="12" fill="#00d8e8"/><rect x="128" y="448" width="1" height="15" fill="#00d8e8"/><rect x="131" y="448" width="1" height="17" fill="#00d8e8"/><rect x="134" y="448" width="1" height="18" fill="#00d8e8"/><rect x="137" y="448" width="1" height="18" fill="#00d8e8"/><rect x="140" y="448" width="1" height="18" fill="#00d8e8"/><rect x="143" y="448" width="1" height="19" fill="#00d8e8"/><rect x="146" y="448" width="1" height="16" fill="#00d8e8"/><rect x="149" y="448" width="1" height="11" fill="#00d8e8"/><rect x="152" y="448" width="1" height="7" fill="#00d8e8"/><rect x="155" y="448" width="1" height="6" fill="#00d8e8"/><rect x="158" y="448" width="1" height="5" fill="#00d8e8"/><rect x="161" y="448" width="1" height="4" fill="#00d8e8"/><rect x="164" y="448" width="1" height="4" fill="#00d8e8"/><rect x="167" y="448" width="1" height="4" fill="#00d8e8"/><rect x="170" y="448" width="1" height="4" fill="#00d8e8"/><rect x="173" y="448" width="1" height="4" fill="#00d8e8"/><rect x="176" y="448" width="1" height="4" fill="#00d8e8"/><rect x="179" y="448" width="1" height="4" fill="#00d8e8"/><rect x="182" y="448" width="1" height="7" fill="#00d8e8"/><rect x="185" y="448" width="1" height="10" fill="#00d8e8"/><rect x="188" y="448" width="1" height="12" fill="#00d8e8"/><rect x="191" y="448" width="1" height="13" fill="#00d8e8"/><rect x="194" y="448" width="1" height="14" fill="#00d8e8"/><rect x="197" y="448" width="1" height="12" fill="#00d8e8"/><rect x="200" y="448" width="1" height="10" fill="#00d8e8"/><rect x="203" y="448" width="1" height="8" fill="#00d8e8"/><rect x="206" y="448" width="1" height="6" fill="#00d8e8"/><rect x="209" y="448" width="1" height="4" fill="#00d8e8"/><rect x="212" y="448" width="1" height="2" fill="#00d8e8"/><rect x="215" y="448" width="1" height="1" fill="#00d8e8"/><rect x="218" y="448" width="1" height="1" fill="#00d8e8"/><rect x="233" y="445" width="1" height="3" fill="#ff4848"/><rect x="236" y="439" width="1" height="9" fill="#ff4848"/><rect x="239" y="439" width="1" height="9" fill="#ff4848"/><rect x="242" y="438" width="1" height="10" fill="#ff4848"/><rect x="245" y="438" width="1" height="10" fill="#ff4848"/><rect x="248" y="438" width="1" height="10" fill="#ff4848"/><rect x="251" y="448" width="1" height="2" fill="#00d8e8"/><rect x="254" y="448" width="1" height="4" fill="#00d8e8"/><rect x="257" y="448" width="1" height="4" fill="#00d8e8"/><rect x="260" y="448" width="1" height="4" fill="#00d8e8"/><rect x="263" y="448" width="1" height="4" fill="#00d8e8"/><rect x="266" y="448" width="1" height="2" fill="#00d8e8"/><rect x="269" y="445" width="1" height="3" fill="#ff4848"/><rect x="272" y="440" width="1" height="8" fill="#ff4848"/><rect x="275" y="437" width="1" height="11" fill="#ff4848"/><rect x="278" y="434" width="1" height="14" fill="#ff4848"/><rect x="281" y="431" width="1" height="17" fill="#ff4848"/><rect x="284" y="430" width="1" height="18" fill="#ff4848"/><rect x="287" y="430" width="1" height="18" fill="#ff4848"/><rect x="290" y="429" width="1" height="19" fill="#ff4848"/><rect x="293" y="429" width="1" height="19" fill="#ff4848"/><rect x="296" y="429" width="1" height="19" fill="#ff4848"/><rect x="299" y="430" width="1" height="18" fill="#ff4848"/><rect x="302" y="432" width="1" height="16" fill="#ff4848"/><rect x="305" y="432" width="1" height="16" fill="#ff4848"/><rect x="308" y="431" width="1" height="17" fill="#ff4848"/><rect x="311" y="430" width="1" height="18" fill="#ff4848"/><rect x="314" y="428" width="1" height="20" fill="#ff4848"/><rect x="317" y="427" width="1" height="21" fill="#ff4848"/><rect x="320" y="425" width="1" height="23" fill="#ff4848"/><rect x="323" y="424" width="1" height="24" fill="#ff4848"/><rect x="326" y="423" width="1" height="25" fill="#ff4848"/><rect x="329" y="424" width="1" height="24" fill="#ff4848"/><rect x="332" y="425" width="1" height="23" fill="#ff4848"/><rect x="335" y="427" width="1" height="21" fill="#ff4848"/><rect x="338" y="431" width="1" height="17" fill="#ff4848"/><rect x="341" y="436" width="1" height="12" fill="#ff4848"/><rect x="344" y="444" width="1" height="4" fill="#ff4848"/><rect x="347" y="448" width="1" height="4" fill="#00d8e8"/><rect x="350" y="448" width="1" height="8" fill="#00d8e8"/><rect x="353" y="448" width="1" height="12" fill="#00d8e8"/><rect x="356" y="448" width="1" height="15" fill="#00d8e8"/><rect x="359" y="448" width="1" height="19" fill="#00d8e8"/><rect x="362" y="448" width="1" height="23" fill="#00d8e8"/><rect x="365" y="448" width="1" height="21" fill="#00d8e8"/><rect x="368" y="448" width="1" height="15" fill="#00d8e8"/><rect x="371" y="448" width="1" height="10" fill="#00d8e8"/><rect x="374" y="448" width="1" height="5" fill="#00d8e8"/><rect x="380" y="444" width="1" height="4" fill="#ff4848"/><rect x="383" y="441" width="1" height="7" fill="#ff4848"/><rect x="386" y="441" width="1" height="7" fill="#ff4848"/><rect x="389" y="440" width="1" height="8" fill="#ff4848"/><rect x="392" y="439" width="1" height="9" fill="#ff4848"/><rect x="395" y="438" width="1" height="10" fill="#ff4848"/><rect x="398" y="434" width="1" height="14" fill="#ff4848"/><rect x="401" y="432" width="1" height="16" fill="#ff4848"/><rect x="404" y="432" width="1" height="16" fill="#ff4848"/><rect x="407" y="433" width="1" height="15" fill="#ff4848"/><rect x="410" y="433" width="1" height="15" fill="#ff4848"/><rect x="413" y="435" width="1" height="13" fill="#ff4848"/><rect x="416" y="437" width="1" height="11" fill="#ff4848"/><rect x="419" y="439" width="1" height="9" fill="#ff4848"/><rect x="422" y="440" width="1" height="8" fill="#ff4848"/><rect x="425" y="445" width="1" height="3" fill="#ff4848"/><rect x="428" y="448" width="1" height="8" fill="#00d8e8"/><rect x="431" y="448" width="1" height="12" fill="#00d8e8"/><rect x="434" y="448" width="1" height="16" fill="#00d8e8"/><rect x="437" y="448" width="1" height="21" fill="#00d8e8"/><rect x="440" y="448" width="1" height="23" fill="#00d8e8"/><rect x="443" y="448" width="1" height="24" fill="#00d8e8"/><rect x="446" y="448" width="1" height="25" fill="#00d8e8"/><rect x="449" y="448" width="1" height="23" fill="#00d8e8"/><rect x="452" y="448" width="1" height="21" fill="#00d8e8"/><rect x="455" y="448" width="1" height="18" fill="#00d8e8"/><rect x="458" y="448" width="1" height="14" fill="#00d8e8"/><rect x="461" y="448" width="1" height="10" fill="#00d8e8"/><rect x="464" y="448" width="1" height="7" fill="#00d8e8"/><rect x="467" y="448" width="1" height="5" fill="#00d8e8"/><rect x="470" y="448" width="1" height="4" fill="#00d8e8"/><rect x="473" y="448" width="1" height="1" fill="#00d8e8"/><rect x="476" y="444" width="1" height="4" fill="#ff4848"/><rect x="479" y="439" width="1" height="9" fill="#ff4848"/><rect x="482" y="437" width="1" height="11" fill="#ff4848"/><rect x="485" y="435" width="1" height="13" fill="#ff4848"/><rect x="488" y="433" width="1" height="15" fill="#ff4848"/><rect x="491" y="431" width="1" height="17" fill="#ff4848"/><rect x="494" y="428" width="1" height="20" fill="#ff4848"/><rect x="497" y="426" width="1" height="22" fill="#ff4848"/><rect x="500" y="424" width="1" height="24" fill="#ff4848"/><rect x="503" y="424" width="1" height="24" fill="#ff4848"/><rect x="506" y="425" width="1" height="23" fill="#ff4848"/><rect x="509" y="426" width="1" height="22" fill="#ff4848"/><rect x="512" y="429" width="1" height="19" fill="#ff4848"/><rect x="515" y="433" width="1" height="15" fill="#ff4848"/><rect x="518" y="436" width="1" height="12" fill="#ff4848"/><rect x="521" y="440" width="1" height="8" fill="#ff4848"/><rect x="524" y="443" width="1" height="5" fill="#ff4848"/><rect x="527" y="445" width="1" height="3" fill="#ff4848"/><rect x="533" y="448" width="1" height="4" fill="#00d8e8"/><rect x="536" y="448" width="1" height="6" fill="#00d8e8"/><rect x="539" y="448" width="1" height="7" fill="#00d8e8"/><rect x="542" y="448" width="1" height="8" fill="#00d8e8"/><rect x="545" y="448" width="1" height="9" fill="#00d8e8"/><rect x="548" y="448" width="1" height="9" fill="#00d8e8"/><rect x="551" y="448" width="1" height="7" fill="#00d8e8"/><rect x="554" y="448" width="1" height="6" fill="#00d8e8"/><rect x="557" y="448" width="1" height="4" fill="#00d8e8"/><rect x="560" y="448" width="1" height="4" fill="#00d8e8"/><rect x="563" y="448" width="1" height="4" fill="#00d8e8"/><rect x="566" y="448" width="1" height="4" fill="#00d8e8"/><rect x="569" y="448" width="1" height="5" fill="#00d8e8"/><rect x="572" y="448" width="1" height="6" fill="#00d8e8"/><rect x="575" y="448" width="1" height="7" fill="#00d8e8"/><rect x="578" y="448" width="1" height="2" fill="#00d8e8"/><rect x="581" y="430" width="1" height="18" fill="#ff4848"/><rect x="584" y="431" width="1" height="17" fill="#ff4848"/><rect x="587" y="431" width="1" height="17" fill="#ff4848"/><rect x="590" y="432" width="1" height="16" fill="#ff4848"/><rect x="593" y="434" width="1" height="14" fill="#ff4848"/><rect x="596" y="437" width="1" height="11" fill="#ff4848"/><rect x="599" y="439" width="1" height="9" fill="#ff4848"/><rect x="602" y="441" width="1" height="7" fill="#ff4848"/><rect x="605" y="444" width="1" height="4" fill="#ff4848"/><rect x="608" y="447" width="1" height="1" fill="#ff4848"/><rect x="611" y="444" width="1" height="4" fill="#ff4848"/><rect x="614" y="440" width="1" height="8" fill="#ff4848"/><rect x="617" y="437" width="1" height="11" fill="#ff4848"/><rect x="620" y="434" width="1" height="14" fill="#ff4848"/><rect x="623" y="431" width="1" height="17" fill="#ff4848"/><rect x="626" y="428" width="1" height="20" fill="#ff4848"/><rect x="629" y="430" width="1" height="18" fill="#ff4848"/><rect x="632" y="432" width="1" height="16" fill="#ff4848"/><rect x="635" y="441" width="1" height="7" fill="#ff4848"/><rect x="638" y="448" width="1" height="2" fill="#00d8e8"/><rect x="641" y="448" width="1" height="7" fill="#00d8e8"/><rect x="644" y="448" width="1" height="8" fill="#00d8e8"/><rect x="647" y="448" width="1" height="9" fill="#00d8e8"/><rect x="650" y="448" width="1" height="10" fill="#00d8e8"/><rect x="653" y="448" width="1" height="11" fill="#00d8e8"/><rect x="656" y="448" width="1" height="12" fill="#00d8e8"/><rect x="659" y="448" width="1" height="12" fill="#00d8e8"/><rect x="662" y="448" width="1" height="13" fill="#00d8e8"/><rect x="665" y="448" width="1" height="13" fill="#00d8e8"/><rect x="668" y="448" width="1" height="13" fill="#00d8e8"/><rect x="671" y="448" width="1" height="14" fill="#00d8e8"/><rect x="674" y="448" width="1" height="14" fill="#00d8e8"/><rect x="677" y="448" width="1" height="15" fill="#00d8e8"/><rect x="680" y="448" width="1" height="16" fill="#00d8e8"/><rect x="683" y="448" width="1" height="17" fill="#00d8e8"/><rect x="686" y="448" width="1" height="20" fill="#00d8e8"/><rect x="689" y="448" width="1" height="23" fill="#00d8e8"/><rect x="692" y="448" width="1" height="26" fill="#00d8e8"/><rect x="695" y="448" width="1" height="29" fill="#00d8e8"/><rect x="698" y="448" width="1" height="30" fill="#00d8e8"/><rect x="701" y="448" width="1" height="32" fill="#00d8e8"/><rect x="704" y="448" width="1" height="29" fill="#00d8e8"/><rect x="707" y="448" width="1" height="25" fill="#00d8e8"/><rect x="710" y="448" width="1" height="21" fill="#00d8e8"/><rect x="713" y="448" width="1" height="18" fill="#00d8e8"/><rect x="716" y="448" width="1" height="16" fill="#00d8e8"/><rect x="719" y="448" width="1" height="13" fill="#00d8e8"/><rect x="722" y="448" width="1" height="13" fill="#00d8e8"/><rect x="725" y="448" width="1" height="16" fill="#00d8e8"/><rect x="728" y="448" width="1" height="17" fill="#00d8e8"/><rect x="731" y="448" width="1" height="17" fill="#00d8e8"/><rect x="734" y="448" width="1" height="17" fill="#00d8e8"/><path d="M63.5,449.0 C65.8,448.3 73.8,447.1 77.6,445.0 C81.4,442.9 82.9,439.4 86.4,436.4 C89.9,433.3 95.2,428.2 98.7,426.7 C102.2,425.2 104.6,427.0 107.5,427.6 C110.4,428.2 113.3,428.0 116.2,430.2 C119.1,432.4 121.8,438.0 125.0,440.8 C128.2,443.6 132.4,445.0 135.6,446.9 C138.8,448.8 141.8,451.2 144.4,452.2 C147.0,453.2 146.1,452.9 151.4,453.0 C156.7,453.1 170.7,452.0 176.0,453.0 C181.3,454.0 180.4,457.0 183.0,459.2 C185.6,461.4 188.9,464.9 191.8,466.2 C194.7,467.5 197.7,467.1 200.6,467.0 C203.5,466.9 205.0,465.5 209.4,465.4 C213.8,465.3 221.9,466.6 227.0,466.2 C232.1,465.8 234.9,463.1 240.0,463.0 C245.1,462.9 253.2,465.3 257.6,465.6 C262.0,465.9 263.5,466.0 266.4,464.8 C269.3,463.6 270.8,461.4 275.2,458.6 C279.6,455.8 286.9,451.2 292.8,448.0 C298.7,444.8 305.9,442.1 310.3,439.3 C314.7,436.5 316.1,433.2 319.0,431.3 C321.9,429.4 325.1,428.4 328.0,427.8 C330.9,427.2 333.8,426.8 336.7,427.8 C339.6,428.8 342.6,432.0 345.5,434.0 C348.4,436.0 351.4,437.4 354.3,440.0 C357.2,442.6 360.4,448.3 363.0,449.8 C365.6,451.3 367.7,449.6 370.0,449.0 C372.3,448.4 373.8,447.5 377.0,446.3 C380.2,445.1 384.4,444.4 389.4,441.9 C394.4,439.4 401.9,433.2 407.0,431.3 C412.1,429.4 415.4,429.5 420.0,430.4 C424.6,431.3 429.7,433.4 434.5,436.5 C439.3,439.6 444.1,446.4 448.9,449.2 C453.7,452.0 458.6,453.2 463.4,453.5 C468.2,453.8 473.0,452.9 477.8,451.0 C482.6,449.1 486.9,445.6 492.3,442.0 C497.7,438.4 504.3,431.1 510.3,429.3 C516.3,427.5 522.4,429.7 528.4,431.1 C534.4,432.5 541.0,436.5 546.4,437.6 C551.8,438.7 556.1,437.2 560.9,437.6 C565.7,438.0 571.1,441.6 575.3,440.2 C579.5,438.8 581.4,431.1 586.2,429.3 C591.0,427.5 598.8,430.8 604.2,429.3 C609.6,427.8 614.2,423.0 618.7,420.3 C623.2,417.6 627.1,412.8 631.3,413.1 C635.5,413.4 639.5,419.1 644.0,422.1 C648.5,425.1 653.6,428.4 658.4,431.1 C663.2,433.8 668.7,435.4 672.9,438.4 C677.1,441.4 678.9,444.7 683.7,449.2 C688.5,453.7 697.0,461.8 701.8,465.4 C706.6,469.0 709.6,470.6 712.6,470.9 C715.6,471.2 716.9,466.2 719.9,467.3 C722.9,468.4 727.8,475.7 730.7,477.4 C733.6,479.1 736.1,477.4 737.2,477.4" stroke="#f0f0f0" stroke-width="1.1" fill="none" stroke-linejoin="round"/><path d="M63.5,449.5 C66.1,449.1 74.6,448.6 79.3,446.9 C84.0,445.1 87.5,441.5 91.6,439.0 C95.7,436.5 100.2,433.5 104.0,432.0 C107.8,430.5 111.3,430.2 114.5,430.2 C117.7,430.2 120.1,430.7 123.3,432.0 C126.5,433.3 130.6,435.9 133.8,438.1 C137.0,440.3 139.7,443.1 142.6,445.1 C145.5,447.2 147.6,449.2 151.4,450.4 C155.2,451.6 161.4,451.9 165.5,452.2 C169.6,452.5 172.5,451.3 176.0,452.2 C179.5,453.1 183.0,455.8 186.5,457.5 C190.0,459.2 193.8,461.5 197.0,462.7 C200.2,463.9 201.2,464.1 205.9,464.5 C210.6,464.9 219.5,465.3 225.2,465.4 C230.9,465.4 234.6,464.9 240.0,464.8 C245.4,464.7 251.7,465.4 257.6,464.8 C263.5,464.2 269.3,463.3 275.2,461.2 C281.1,459.1 286.9,455.3 292.8,452.4 C298.7,449.5 305.0,446.5 310.3,443.6 C315.6,440.7 319.7,437.1 324.4,434.9 C329.1,432.7 334.3,430.9 338.4,430.5 C342.5,430.1 345.5,431.0 349.0,432.3 C352.5,433.6 356.0,436.3 359.5,438.4 C363.0,440.4 366.5,443.4 370.0,444.6 C373.5,445.8 375.9,446.3 380.6,445.4 C385.3,444.5 392.1,441.4 398.0,439.3 C403.9,437.2 412.1,434.4 415.8,433.1 C419.5,431.8 416.3,430.8 420.0,431.5 C423.7,432.2 432.0,434.8 438.0,437.6 C444.0,440.4 450.1,446.0 456.1,448.5 C462.1,451.0 468.2,453.3 474.2,452.8 C480.2,452.3 485.7,449.2 492.3,445.6 C498.9,442.0 507.9,433.8 513.9,431.1 C519.9,428.4 522.4,428.7 528.4,429.3 C534.4,429.9 542.8,433.2 550.0,434.7 C557.2,436.2 565.1,439.0 571.7,438.4 C578.3,437.8 582.6,432.8 589.8,431.1 C597.0,429.4 607.3,430.3 615.1,428.2 C622.9,426.1 630.2,418.9 636.8,418.5 C643.4,418.1 648.8,423.0 654.8,425.7 C660.8,428.4 666.3,430.2 672.9,434.7 C679.5,439.2 688.6,448.0 694.6,452.8 C700.6,457.6 703.6,460.9 709.0,463.6 C714.4,466.3 722.4,467.3 727.1,469.1 C731.8,470.9 735.5,473.6 737.2,474.5" stroke="#e8e000" stroke-width="1.2" fill="none" stroke-linejoin="round"/><rect x="64" y="521.1" width="2" height="3.1" fill="#a00000"/><rect x="67" y="521.2" width="2" height="3.5" fill="#a00000"/><rect x="70" y="521.5" width="2" height="3.5" fill="#a00000"/><rect x="73" y="522.1" width="2" height="3.0" fill="#a00000"/><rect x="76" y="522.4" width="2" height="2.5" fill="#a00000"/><rect x="79" y="522.0" width="2" height="3.3" fill="#a00000"/><rect x="82" y="520.8" width="2" height="4.7" fill="#0010ff"/><rect x="85" y="519.7" width="2" height="5.1" fill="#0010ff"/><rect x="88" y="519.0" width="2" height="5.0" fill="#0010ff"/><rect x="91" y="518.0" width="2" height="5.4" fill="#0010ff"/><rect x="94" y="516.5" width="2" height="6.2" fill="#0010ff"/><rect x="97" y="515.1" width="2" height="6.5" fill="#0010ff"/><rect x="100" y="514.4" width="2" height="5.5" fill="#0010ff"/><rect x="103" y="514.5" width="2" height="4.0" fill="#0010ff"/><rect x="106" y="514.3" width="2" height="3.7" fill="#0010ff"/><rect x="109" y="514.0" width="2" height="3.6" fill="#0010ff"/><rect x="112" y="514.0" width="2" height="3.0" fill="#0010ff"/><rect x="115" y="514.2" width="2" height="2.5" fill="#0010ff"/><rect x="118" y="513.9" width="2" height="3.2" fill="#0010ff"/><rect x="121" y="514.0" width="2" height="3.9" fill="#a00000"/><rect x="124" y="514.3" width="2" height="4.1" fill="#a00000"/><rect x="127" y="514.8" width="2" height="4.2" fill="#a00000"/><rect x="130" y="515.1" width="2" height="4.7" fill="#a00000"/><rect x="133" y="515.6" width="2" height="5.4" fill="#a00000"/><rect x="136" y="516.4" width="2" height="5.6" fill="#a00000"/><rect x="139" y="517.2" width="2" height="6.1" fill="#a00000"/><rect x="142" y="518.2" width="2" height="6.6" fill="#a00000"/><rect x="145" y="519.8" width="2" height="6.0" fill="#a00000"/><rect x="148" y="521.2" width="2" height="5.1" fill="#a00000"/><rect x="151" y="522.0" width="2" height="4.8" fill="#a00000"/><rect x="154" y="522.7" width="2" height="4.8" fill="#a00000"/><rect x="157" y="523.5" width="2" height="4.8" fill="#a00000"/><rect x="160" y="524.2" width="2" height="4.8" fill="#a00000"/><rect x="163" y="524.9" width="2" height="4.8" fill="#a00000"/><rect x="166" y="525.6" width="2" height="5.0" fill="#a00000"/><rect x="169" y="526.2" width="2" height="5.4" fill="#a00000"/><rect x="172" y="527.1" width="2" height="5.5" fill="#a00000"/><rect x="175" y="528.0" width="2" height="5.5" fill="#a00000"/><rect x="178" y="528.3" width="2" height="6.8" fill="#a00000"/><rect x="181" y="529.4" width="2" height="8.2" fill="#a00000"/><rect x="184" y="531.1" width="2" height="8.2" fill="#a00000"/><rect x="187" y="533.0" width="2" height="8.1" fill="#a00000"/><rect x="190" y="534.9" width="2" height="7.9" fill="#a00000"/><rect x="193" y="536.6" width="2" height="7.7" fill="#a00000"/><rect x="196" y="538.2" width="2" height="7.7" fill="#a00000"/><rect x="199" y="540.1" width="2" height="7.2" fill="#a00000"/><rect x="202" y="541.7" width="2" height="6.5" fill="#a00000"/><rect x="205" y="543.0" width="2" height="6.3" fill="#a00000"/><rect x="208" y="544.1" width="2" height="6.4" fill="#a00000"/><rect x="211" y="545.1" width="2" height="6.9" fill="#a00000"/><rect x="214" y="546.4" width="2" height="7.3" fill="#a00000"/><rect x="217" y="548.0" width="2" height="7.3" fill="#a00000"/><rect x="220" y="549.8" width="2" height="6.7" fill="#a00000"/><rect x="223" y="551.4" width="2" height="5.7" fill="#a00000"/><rect x="226" y="552.5" width="2" height="5.3" fill="#a00000"/><rect x="229" y="553.4" width="2" height="5.3" fill="#a00000"/><rect x="232" y="554.3" width="2" height="5.2" fill="#a00000"/><rect x="235" y="555.2" width="2" height="5.0" fill="#a00000"/><rect x="238" y="556.0" width="2" height="5.0" fill="#a00000"/><rect x="241" y="556.9" width="2" height="4.8" fill="#a00000"/><rect x="244" y="557.7" width="2" height="4.5" fill="#a00000"/><rect x="247" y="558.4" width="2" height="4.3" fill="#a00000"/><rect x="250" y="558.9" width="2" height="4.3" fill="#a00000"/><rect x="253" y="559.6" width="2" height="4.2" fill="#a00000"/><rect x="256" y="560.1" width="2" height="4.0" fill="#a00000"/><rect x="259" y="560.6" width="2" height="4.0" fill="#a00000"/><rect x="262" y="561.2" width="2" height="3.8" fill="#a00000"/><rect x="265" y="561.8" width="2" height="3.3" fill="#a00000"/><rect x="268" y="562.1" width="2" height="2.9" fill="#a00000"/><rect x="271" y="562.2" width="2" height="2.9" fill="#a00000"/><rect x="274" y="562.5" width="2" height="2.5" fill="#a00000"/><rect x="277" y="562.2" width="2" height="2.9" fill="#a00000"/><rect x="280" y="561.6" width="2" height="3.8" fill="#0010ff"/><rect x="283" y="560.7" width="2" height="4.5" fill="#0010ff"/><rect x="286" y="560.0" width="2" height="4.5" fill="#0010ff"/><rect x="289" y="559.3" width="2" height="4.8" fill="#0010ff"/><rect x="292" y="558.2" width="2" height="5.2" fill="#0010ff"/><rect x="295" y="557.3" width="2" height="5.4" fill="#0010ff"/><rect x="298" y="556.2" width="2" height="5.6" fill="#0010ff"/><rect x="301" y="555.0" width="2" height="6.1" fill="#0010ff"/><rect x="304" y="553.6" width="2" height="6.3" fill="#0010ff"/><rect x="307" y="552.3" width="2" height="6.7" fill="#0010ff"/><rect x="310" y="550.2" width="2" height="8.1" fill="#0010ff"/><rect x="313" y="547.5" width="2" height="9.2" fill="#0010ff"/><rect x="316" y="545.4" width="2" height="9.2" fill="#0010ff"/><rect x="319" y="544.2" width="2" height="7.5" fill="#0010ff"/><rect x="322" y="544.0" width="2" height="5.8" fill="#0010ff"/><rect x="325" y="542.3" width="2" height="7.0" fill="#0010ff"/><rect x="328" y="539.6" width="2" height="9.0" fill="#0010ff"/><rect x="331" y="536.3" width="2" height="10.9" fill="#0010ff"/><rect x="334" y="533.4" width="2" height="10.9" fill="#0010ff"/><rect x="337" y="531.9" width="2" height="9.3" fill="#0010ff"/><rect x="340" y="530.4" width="2" height="8.3" fill="#0010ff"/><rect x="343" y="529.2" width="2" height="7.4" fill="#0010ff"/><rect x="346" y="528.5" width="2" height="5.8" fill="#0010ff"/><rect x="349" y="528.9" width="2" height="4.1" fill="#0010ff"/><rect x="352" y="528.7" width="2" height="3.6" fill="#0010ff"/><rect x="355" y="528.6" width="2" height="3.2" fill="#0010ff"/><rect x="358" y="528.6" width="2" height="3.0" fill="#0010ff"/><rect x="361" y="528.3" width="2" height="3.1" fill="#0010ff"/><rect x="364" y="527.9" width="2" height="3.5" fill="#0010ff"/><rect x="367" y="527.4" width="2" height="3.7" fill="#0010ff"/><rect x="370" y="526.9" width="2" height="4.0" fill="#0010ff"/><rect x="373" y="526.1" width="2" height="4.5" fill="#0010ff"/><rect x="376" y="525.3" width="2" height="4.7" fill="#0010ff"/><rect x="379" y="524.4" width="2" height="5.1" fill="#0010ff"/><rect x="382" y="523.4" width="2" height="5.3" fill="#0010ff"/><rect x="385" y="522.5" width="2" height="5.3" fill="#0010ff"/><rect x="388" y="521.7" width="2" height="5.3" fill="#0010ff"/><rect x="391" y="520.4" width="2" height="6.1" fill="#0010ff"/><rect x="394" y="518.5" width="2" height="7.2" fill="#0010ff"/><rect x="397" y="516.9" width="2" height="7.3" fill="#0010ff"/><rect x="400" y="515.4" width="2" height="7.2" fill="#0010ff"/><rect x="403" y="514.2" width="2" height="6.7" fill="#0010ff"/><rect x="406" y="513.2" width="2" height="6.3" fill="#0010ff"/><rect x="409" y="512.0" width="2" height="6.3" fill="#0010ff"/><rect x="412" y="511.2" width="2" height="5.7" fill="#0010ff"/><rect x="415" y="510.9" width="2" height="4.7" fill="#0010ff"/><rect x="418" y="510.4" width="2" height="4.4" fill="#0010ff"/><rect x="421" y="509.9" width="2" height="4.3" fill="#0010ff"/><rect x="424" y="509.7" width="2" height="3.7" fill="#0010ff"/><rect x="427" y="509.8" width="2" height="3.1" fill="#0010ff"/><rect x="430" y="509.7" width="2" height="2.8" fill="#0010ff"/><rect x="433" y="509.4" width="2" height="3.4" fill="#0010ff"/><rect x="436" y="509.5" width="2" height="4.3" fill="#a00000"/><rect x="439" y="509.8" width="2" height="4.8" fill="#a00000"/><rect x="442" y="510.0" width="2" height="6.3" fill="#a00000"/><rect x="445" y="511.0" width="2" height="7.3" fill="#a00000"/><rect x="448" y="512.6" width="2" height="7.0" fill="#a00000"/><rect x="451" y="514.2" width="2" height="6.5" fill="#a00000"/><rect x="454" y="515.5" width="2" height="6.3" fill="#a00000"/><rect x="457" y="516.7" width="2" height="6.3" fill="#a00000"/><rect x="460" y="518.2" width="2" height="5.7" fill="#a00000"/><rect x="463" y="519.3" width="2" height="5.0" fill="#a00000"/><rect x="466" y="520.1" width="2" height="5.0" fill="#a00000"/><rect x="469" y="521.0" width="2" height="4.8" fill="#a00000"/><rect x="472" y="521.9" width="2" height="4.2" fill="#a00000"/><rect x="475" y="522.5" width="2" height="3.8" fill="#a00000"/><rect x="478" y="523.0" width="2" height="3.8" fill="#a00000"/><rect x="481" y="523.6" width="2" height="3.3" fill="#a00000"/><rect x="484" y="524.1" width="2" height="2.7" fill="#a00000"/><rect x="487" y="524.1" width="2" height="2.5" fill="#a00000"/><rect x="490" y="523.3" width="2" height="4.1" fill="#0010ff"/><rect x="493" y="521.4" width="2" height="5.9" fill="#0010ff"/><rect x="496" y="520.2" width="2" height="6.1" fill="#0010ff"/><rect x="499" y="519.0" width="2" height="6.2" fill="#0010ff"/><rect x="502" y="517.8" width="2" height="6.4" fill="#0010ff"/><rect x="505" y="516.6" width="2" height="6.4" fill="#0010ff"/><rect x="508" y="515.5" width="2" height="6.1" fill="#0010ff"/><rect x="511" y="514.7" width="2" height="5.6" fill="#0010ff"/><rect x="514" y="513.9" width="2" height="5.3" fill="#0010ff"/><rect x="517" y="513.0" width="2" height="5.3" fill="#0010ff"/><rect x="520" y="512.4" width="2" height="4.9" fill="#0010ff"/><rect x="523" y="512.0" width="2" height="4.4" fill="#0010ff"/><rect x="526" y="511.4" width="2" height="4.4" fill="#0010ff"/><rect x="529" y="510.9" width="2" height="4.2" fill="#0010ff"/><rect x="532" y="510.8" width="2" height="3.4" fill="#0010ff"/><rect x="535" y="510.9" width="2" height="2.9" fill="#0010ff"/><rect x="538" y="510.8" width="2" height="2.9" fill="#0010ff"/><rect x="541" y="510.6" width="2" height="3.1" fill="#0010ff"/><rect x="544" y="510.2" width="2" height="3.4" fill="#0010ff"/><rect x="547" y="509.8" width="2" height="3.5" fill="#0010ff"/><rect x="550" y="509.5" width="2" height="3.5" fill="#0010ff"/><rect x="553" y="508.9" width="2" height="4.0" fill="#0010ff"/><rect x="556" y="508.1" width="2" height="4.4" fill="#0010ff"/><rect x="559" y="507.6" width="2" height="4.4" fill="#0010ff"/><rect x="562" y="507.1" width="2" height="4.1" fill="#0010ff"/><rect x="565" y="506.9" width="2" height="3.7" fill="#0010ff"/><rect x="568" y="506.7" width="2" height="3.5" fill="#0010ff"/><rect x="571" y="506.4" width="2" height="3.5" fill="#0010ff"/><rect x="574" y="506.1" width="2" height="3.4" fill="#0010ff"/><rect x="577" y="505.8" width="2" height="3.4" fill="#0010ff"/><rect x="580" y="505.6" width="2" height="3.4" fill="#0010ff"/><rect x="583" y="505.1" width="2" height="3.7" fill="#0010ff"/><rect x="586" y="504.3" width="2" height="4.5" fill="#0010ff"/><rect x="589" y="503.5" width="2" height="4.5" fill="#0010ff"/><rect x="592" y="503.3" width="2" height="3.8" fill="#0010ff"/><rect x="595" y="503.2" width="2" height="3.4" fill="#0010ff"/><rect x="598" y="502.9" width="2" height="3.5" fill="#0010ff"/><rect x="601" y="502.5" width="2" height="3.7" fill="#0010ff"/><rect x="604" y="501.9" width="2" height="3.9" fill="#0010ff"/><rect x="607" y="501.5" width="2" height="3.9" fill="#0010ff"/><rect x="610" y="501.0" width="2" height="3.9" fill="#0010ff"/><rect x="613" y="500.6" width="2" height="4.0" fill="#0010ff"/><rect x="616" y="500.1" width="2" height="4.0" fill="#0010ff"/><rect x="619" y="499.7" width="2" height="3.9" fill="#0010ff"/><rect x="622" y="499.4" width="2" height="3.6" fill="#0010ff"/><rect x="625" y="499.2" width="2" height="3.4" fill="#0010ff"/><rect x="628" y="498.9" width="2" height="3.4" fill="#0010ff"/><rect x="631" y="499.0" width="2" height="2.6" fill="#0010ff"/><rect x="634" y="498.9" width="2" height="3.3" fill="#0010ff"/><rect x="637" y="499.1" width="2" height="3.4" fill="#a00000"/><rect x="640" y="499.4" width="2" height="3.4" fill="#a00000"/><rect x="643" y="499.7" width="2" height="3.4" fill="#a00000"/><rect x="646" y="500.0" width="2" height="3.4" fill="#a00000"/><rect x="649" y="500.3" width="2" height="3.5" fill="#a00000"/><rect x="652" y="500.5" width="2" height="3.7" fill="#a00000"/><rect x="655" y="500.8" width="2" height="4.0" fill="#a00000"/><rect x="658" y="501.3" width="2" height="4.0" fill="#a00000"/><rect x="661" y="501.7" width="2" height="4.2" fill="#a00000"/><rect x="664" y="502.1" width="2" height="4.4" fill="#a00000"/><rect x="667" y="502.7" width="2" height="4.5" fill="#a00000"/><rect x="670" y="503.3" width="2" height="4.5" fill="#a00000"/><rect x="673" y="503.8" width="2" height="4.7" fill="#a00000"/><rect x="676" y="504.5" width="2" height="4.9" fill="#a00000"/><rect x="679" y="505.2" width="2" height="4.9" fill="#a00000"/><rect x="682" y="505.5" width="2" height="5.9" fill="#a00000"/><rect x="685" y="506.2" width="2" height="7.1" fill="#a00000"/><rect x="688" y="507.6" width="2" height="7.3" fill="#a00000"/><rect x="691" y="509.1" width="2" height="7.3" fill="#a00000"/><rect x="694" y="510.6" width="2" height="7.3" fill="#a00000"/><rect x="697" y="512.1" width="2" height="7.3" fill="#a00000"/><rect x="700" y="513.6" width="2" height="7.3" fill="#a00000"/><rect x="703" y="514.6" width="2" height="8.3" fill="#a00000"/><rect x="706" y="516.2" width="2" height="9.2" fill="#a00000"/><rect x="709" y="518.3" width="2" height="9.2" fill="#a00000"/><rect x="712" y="520.5" width="2" height="8.9" fill="#a00000"/><rect x="715" y="522.7" width="2" height="8.4" fill="#a00000"/><rect x="718" y="524.6" width="2" height="8.2" fill="#a00000"/><rect x="721" y="526.4" width="2" height="8.2" fill="#a00000"/><rect x="724" y="528.0" width="2" height="8.4" fill="#a00000"/><rect x="727" y="529.9" width="2" height="8.6" fill="#a00000"/><rect x="730" y="531.6" width="2" height="8.8" fill="#a00000"/><rect x="733" y="533.4" width="2" height="9.4" fill="#a00000"/><rect x="736" y="536.8" width="2" height="7.1" fill="#a00000"/><rect x="64" y="517" width="673" height="1" fill="#0000ff"/><rect x="64" y="535" width="673" height="1" fill="#00e000"/><rect x="64" y="553" width="673" height="1" fill="#ff00ff"/><path d="M64.0,674.3 L65.5,672.7 L67.0,670.5 L68.5,668.6 L70.0,664.8 L71.5,661.8 L73.0,656.0 L74.5,655.4 L76.0,659.7 L77.5,661.9 L79.0,653.0 L80.5,640.5 L82.0,631.0 L83.5,623.5 L85.0,622.8 L86.5,621.3 L88.0,618.3 L89.5,618.3 L91.0,617.9 L92.5,619.1 L94.0,617.2 L95.5,612.5 L97.0,611.1 L98.5,606.3 L100.0,612.9 L101.5,629.5 L103.0,636.4 L104.5,636.7 L106.0,633.0 L107.5,631.1 L109.0,637.0 L110.5,640.6 L112.0,643.0 L113.5,648.6 L115.0,651.4 L116.5,656.0 L118.0,661.4 L119.5,669.9 L121.0,675.8 L122.5,681.7 L124.0,686.1 L125.5,684.2 L127.0,675.6 L128.5,676.6 L130.0,678.1 L131.5,679.7 L133.0,682.1 L134.5,684.8 L136.0,685.1 L137.5,688.8 L139.0,692.1 L140.5,696.2 L142.0,701.6 L143.5,704.9 L145.0,702.1 L146.5,690.5 L148.0,679.9 L149.5,679.7 L151.0,683.6 L152.5,682.6 L154.0,683.7 L155.5,681.4 L157.0,676.6 L158.5,675.9 L160.0,672.2 L161.5,675.4 L163.0,677.4 L164.5,681.0 L166.0,683.5 L167.5,685.2 L169.0,682.9 L170.5,684.0 L172.0,684.0 L173.5,688.7 L175.0,694.4 L176.5,701.6 L178.0,709.2 L179.5,717.1 L181.0,722.5 L182.5,724.4 L184.0,723.1 L185.5,721.7 L187.0,719.2 L188.5,724.1 L190.0,724.4 L191.5,727.5 L193.0,730.4 L194.5,728.5 L196.0,724.2 L197.5,723.0 L199.0,719.2 L200.5,715.9 L202.0,714.3 L203.5,712.5 L205.0,710.7 L206.5,712.3 L208.0,716.8 L209.5,709.4 L211.0,699.1 L212.5,697.7 L214.0,709.6 L215.5,713.0 L217.0,713.0 L218.5,712.9 L220.0,714.2 L221.5,715.2 L223.0,716.9 L224.5,719.8 L226.0,721.8 L227.5,724.4 L229.0,717.0 L230.5,713.1 L232.0,708.9 L233.5,702.0 L235.0,698.4 L236.5,697.3 L238.0,698.7 L239.5,701.4 L241.0,701.9 L242.5,705.0 L244.0,707.1 L245.5,711.9 L247.0,713.4 L248.5,716.8 L250.0,721.1 L251.5,722.6 L253.0,724.8 L254.5,725.4 L256.0,727.3 L257.5,727.4 L259.0,722.7 L260.5,718.0 L262.0,714.2 L263.5,709.4 L265.0,707.2 L266.5,706.6 L268.0,704.3 L269.5,701.2 L271.0,698.6 L272.5,690.1 L274.0,681.3 L275.5,673.7 L277.0,670.0 L278.5,667.8 L280.0,664.1 L281.5,662.8 L283.0,660.3 L284.5,657.7 L286.0,655.2 L287.5,653.0 L289.0,649.5 L290.5,647.9 L292.0,650.6 L293.5,664.3 L295.0,664.6 L296.5,660.5 L298.0,655.5 L299.5,653.3 L301.0,648.7 L302.5,644.6 L304.0,636.8 L305.5,631.7 L307.0,624.5 L308.5,620.7 L310.0,617.5 L311.5,615.8 L313.0,612.7 L314.5,610.5 L316.0,609.1 L317.5,610.5 L319.0,611.4 L320.5,612.2 L322.0,611.6 L323.5,613.5 L325.0,614.2 L326.5,614.4 L328.0,615.0 L329.5,614.0 L331.0,612.0 L332.5,611.1 L334.0,609.3 L335.5,610.2 L337.0,620.7 L338.5,635.3 L340.0,647.1 L341.5,649.3 L343.0,651.4 L344.5,652.0 L346.0,655.7 L347.5,657.3 L349.0,660.5 L350.5,664.0 L352.0,668.6 L353.5,673.0 L355.0,676.8 L356.5,683.9 L358.0,689.9 L359.5,698.2 L361.0,706.8 L362.5,715.2 L364.0,711.5 L365.5,703.1 L367.0,693.3 L368.5,682.1 L370.0,671.4 L371.5,655.7 L373.0,649.3 L374.5,651.5 L376.0,654.0 L377.5,655.7 L379.0,657.8 L380.5,657.2 L382.0,653.8 L383.5,649.1 L385.0,652.7 L386.5,655.6 L388.0,657.6 L389.5,658.1 L391.0,649.7 L392.5,644.7 L394.0,638.3 L395.5,632.6 L397.0,625.8 L398.5,628.0 L400.0,630.3 L401.5,632.9 L403.0,636.8 L404.5,630.9 L406.0,627.5 L407.5,626.1 L409.0,626.7 L410.5,627.7 L412.0,627.3 L413.5,626.3 L415.0,627.3 L416.5,626.9 L418.0,631.3 L419.5,637.6 L421.0,641.3 L422.5,641.6 L424.0,643.5 L425.5,646.4 L427.0,648.2 L428.5,650.4 L430.0,658.0 L431.5,663.5 L433.0,671.7 L434.5,680.8 L436.0,683.8 L437.5,686.0 L439.0,694.6 L440.5,700.7 L442.0,701.9 L443.5,704.5 L445.0,706.5 L446.5,700.4 L448.0,693.8 L449.5,693.3 L451.0,697.4 L452.5,699.8 L454.0,697.1 L455.5,694.3 L457.0,694.3 L458.5,691.1 L460.0,688.8 L461.5,685.6 L463.0,684.4 L464.5,680.2 L466.0,681.5 L467.5,688.0 L469.0,691.5 L470.5,686.8 L472.0,680.3 L473.5,673.9 L475.0,670.2 L476.5,666.3 L478.0,660.1 L479.5,657.5 L481.0,655.6 L482.5,656.3 L484.0,654.9 L485.5,650.8 L487.0,644.9 L488.5,638.5 L490.0,634.7 L491.5,630.5 L493.0,630.4 L494.5,629.1 L496.0,628.1 L497.5,620.4 L499.0,613.3 L500.5,604.1 L502.0,606.3 L503.5,614.9 L505.0,624.4 L506.5,619.9 L508.0,615.8 L509.5,612.3 L511.0,612.7 L512.5,613.4 L514.0,615.2 L515.5,615.7 L517.0,616.9 L518.5,620.4 L520.0,622.5 L521.5,623.2 L523.0,622.6 L524.5,621.2 L526.0,620.5 L527.5,623.5 L529.0,623.6 L530.5,626.9 L532.0,637.8 L533.5,648.1 L535.0,649.1 L536.5,649.2 L538.0,646.8 L539.5,647.0 L541.0,653.2 L542.5,656.5 L544.0,661.8 L545.5,664.7 L547.0,662.0 L548.5,661.8 L550.0,649.4 L551.5,636.6 L553.0,631.1 L554.5,629.7 L556.0,627.4 L557.5,622.8 L559.0,628.5 L560.5,637.3 L562.0,645.9 L563.5,650.3 L565.0,651.3 L566.5,654.4 L568.0,660.0 L569.5,663.1 L571.0,668.6 L572.5,667.2 L574.0,657.3 L575.5,646.9 L577.0,633.5 L578.5,623.4 L580.0,612.3 L581.5,604.7 L583.0,601.3 L584.5,597.2 L586.0,601.5 L587.5,602.2 L589.0,605.6 L590.5,610.5 L592.0,615.9 L593.5,620.4 L595.0,626.9 L596.5,627.7 L598.0,623.9 L599.5,623.3 L601.0,621.0 L602.5,618.6 L604.0,618.0 L605.5,620.5 L607.0,625.5 L608.5,631.2 L610.0,624.9 L611.5,618.6 L613.0,613.7 L614.5,607.8 L616.0,600.7 L617.5,590.5 L619.0,586.8 L620.5,597.1 L622.0,608.4 L623.5,608.4 L625.0,607.3 L626.5,603.5 L628.0,600.4 L629.5,599.8 L631.0,605.4 L632.5,613.7 L634.0,620.5 L635.5,628.6 L637.0,634.6 L638.5,641.1 L640.0,646.5 L641.5,651.6 L643.0,650.0 L644.5,650.5 L646.0,649.0 L647.5,647.2 L649.0,646.0 L650.5,644.9 L652.0,644.3 L653.5,641.4 L655.0,641.3 L656.5,639.6 L658.0,645.0 L659.5,654.0 L661.0,655.5 L662.5,654.6 L664.0,654.9 L665.5,653.0 L667.0,657.7 L668.5,660.5 L670.0,663.9 L671.5,668.9 L673.0,670.3 L674.5,671.7 L676.0,669.4 L677.5,669.2 L679.0,668.1 L680.5,666.7 L682.0,679.6 L683.5,693.4 L685.0,709.6 L686.5,711.0 L688.0,707.7 L689.5,704.9 L691.0,712.7 L692.5,718.6 L694.0,714.2 L695.5,707.7 L697.0,707.7 L698.5,715.3 L700.0,723.7 L701.5,717.5 L703.0,713.8 L704.5,707.8 L706.0,706.1 L707.5,708.1 L709.0,712.2 L710.5,714.3 L712.0,711.0 L713.5,705.7 L715.0,701.0 L716.5,694.9 L718.0,688.9 L719.5,695.4 L721.0,703.4 L722.5,710.5 L724.0,720.3 L725.5,725.7 L727.0,725.9 L728.5,723.4 L730.0,724.2 L731.5,722.6 L733.0,717.3 L734.5,712.9 L736.0,713.0" stroke="#ff40c0" stroke-width="1.2" fill="none" stroke-linejoin="round"/><g stroke="#60a8ff" fill="none" stroke-width="1"><rect x="754.5" y="50.5" width="15" height="14"/><rect x="771.5" y="50.5" width="15" height="14"/><rect x="1004.5" y="50.5" width="15" height="13"/><rect x="1007.5" y="53.5" width="9" height="7"/></g><path d="M757,57.5 L761,54 L761,56 L767,56 L767,59 L761,59 L761,61 Z" fill="none" stroke="#80c0ff"/><path d="M784,57.5 L780,54 L780,56 L774,56 L774,59 L780,59 L780,61 Z" fill="none" stroke="#80c0ff"/><rect x="623" y="289" width="112" height="51" fill="#fff"/><rect x="749.5" y="333.5" width="39" height="15" fill="#1c64f0" stroke="#fff"/><rect x="716.5" y="734.5" width="69" height="15" fill="#1c64f0" stroke="#fff"/><rect x="1004" y="257" width="17" height="484" fill="#f4f4ec"/><rect x="1005.5" y="258.5" width="14" height="14" rx="1" fill="#c0c8f8" stroke="#e0e8ff"/><path d="M1008,268 L1012.5,263.5 L1017,268" stroke="#404870" stroke-width="2" fill="none"/><rect x="1005.5" y="707.5" width="14" height="15" fill="#c0c8f8" stroke="#e0e8ff"/><path d="M1009,712 h8 M1009,714 h8 M1009,716 h8 M1009,718 h8" stroke="#a0a8e0"/><rect x="1005.5" y="723.5" width="14" height="15" fill="#c0c8f8" stroke="#e0e8ff"/><path d="M1008,729 L1012.5,733.5 L1017,729" stroke="#404870" stroke-width="2" fill="none"/></svg>
<div class="a m" style="left:4px;top:51px;color:#fff;"><span style="letter-spacing:0;font-family:Liberation Sans;font-size:12px">欧元美元</span>(EURUSD)&lt;60<span style="letter-spacing:0;font-family:Liberation Sans;font-size:12px">分</span>&gt;</div>
<div class="a m" style="left:64px;top:71px;color:#b0b0b0;">K</div>
<div class="a m" style="left:78px;top:71px;color:#b0b0b0;">MA1</div>
<div class="a m" style="left:102px;top:71px;color:#fff;">MA1:1.3959</div>
<div class="a m" style="left:168px;top:71px;color:#ffff00;">MA2:1.4000</div>
<div class="a m" style="left:234px;top:71px;color:#ff00ff;">MA3:1.4036</div>
<div class="a m" style="left:300px;top:71px;color:#00ff00;">MA4:1.4088</div>
<div class="a m" style="left:370px;top:71px;color:#b0b0b0;">BOLL(30,2)</div>
<div class="a m" style="left:436px;top:71px;color:#0000ff;">UPPER:1.4263</div>
<div class="a m" style="left:514px;top:71px;color:#ff8000;">LOWER:1.3913</div>
<div class="a m" style="left:33px;top:88px;color:#b0b0b0;">1.43</div>
<div class="a m" style="left:33px;top:137px;color:#b0b0b0;">1.42</div>
<div class="a m" style="left:33px;top:186px;color:#b0b0b0;">1.41</div>
<div class="a m" style="left:33px;top:235px;color:#b0b0b0;">1.40</div>
<div class="a m" style="left:33px;top:284px;color:#b0b0b0;">1.39</div>
<div class="a m" style="left:33px;top:334px;color:#b0b0b0;">1.38</div>
<div class="a m" style="left:574px;top:97px;color:#e0e0e0;letter-spacing:-0.5px;font-size:12.5px">1.4281</div>
<div class="a m" style="left:201px;top:366px;color:#e0e0e0;letter-spacing:-0.5px;font-size:12.5px">1.3734</div>
<div class="a s" style="left:622px;top:288px;color:#ff0000;font-size:17px;font-weight:bold;letter-spacing:-0.5px">速度！！！</div>
<div class="a m" style="left:751px;top:335px;color:#fff;">1.3783</div>
<div class="a m" style="left:64px;top:400px;color:#b0b0b0;">MACD(26,12,9)</div>
<div class="a m" style="left:148px;top:400px;color:#fff;">DIFF:-4.9250</div>
<div class="a m" style="left:226px;top:400px;color:#ffff00;">DEA:-4.3153</div>
<div class="a m" style="left:298px;top:400px;color:#b0b0b0;">MACD:-1.8290</div>
<div class="a m" style="left:50px;top:442px;color:#b0b0b0;">0</div>
<div class="a s" style="left:64px;top:485px;color:#b0b0b0;">B指标</div>
<div class="a m" style="left:100px;top:485px;color:#fff;">股:40.2001</div>
<div class="a m" style="left:166px;top:485px;color:#ffff00;">差:-6.8637</div>
<div class="a m" style="left:232px;top:485px;color:#ff00ff;">30.0000</div>
<div class="a m" style="left:280px;top:485px;color:#00ff00;">50.0000</div>
<div class="a m" style="left:328px;top:485px;color:#0000ff;">70.0000</div>
<div class="a m" style="left:45px;top:529px;color:#b0b0b0;">50</div>
<div class="a m" style="left:64px;top:571px;color:#b0b0b0;">RSI(14,14,14)</div>
<div class="a m" style="left:148px;top:571px;color:#fff;">RSI1:33.1640</div>
<div class="a m" style="left:226px;top:571px;color:#ffff00;">RSI2:33.1640</div>
<div class="a m" style="left:304px;top:571px;color:#ff00ff;">RSI3:33.1640</div>
<div class="a m" style="left:45px;top:586px;color:#b0b0b0;">80</div>
<div class="a m" style="left:45px;top:589px;color:#b0b0b0;">79</div>
<div class="a m" style="left:45px;top:625px;color:#b0b0b0;">65</div>
<div class="a m" style="left:45px;top:688px;color:#b0b0b0;">41</div>
<div class="a m" style="left:45px;top:691px;color:#b0b0b0;">40</div>
<div class="a m" style="left:45px;top:717px;color:#b0b0b0;">30</div>
<div class="a s" style="left:34px;top:737px;color:#fff;">60分</div>
<div class="a s" style="left:65px;top:737px;color:#fff;">1023</div>
<div class="a s" style="left:181px;top:737px;color:#fff;">27</div>
<div class="a s" style="left:309px;top:737px;color:#fff;">29</div>
<div class="a s" style="left:383px;top:737px;color:#fff;">1101</div>
<div class="a s" style="left:501px;top:737px;color:#fff;">03</div>
<div class="a s" style="left:627px;top:737px;color:#fff;">05</div>
<div class="a s" style="left:709px;top:737px;color:#fff;">0</div>
<div class="a m" style="left:718px;top:737px;color:#fff;letter-spacing:-1.2px;font-size:12px">11-08 06:00</div>
<div class="a s" style="left:825px;top:52px;color:#f0e000;font-size:17.5px;font-family:'Liberation Serif',serif">欧元美元(EURUSD)</div>
<div class="a s" style="left:794px;top:77px;color:#fff;">卖出</div>
<div class="a s" style="left:856px;top:77px;color:#00ff00;transform:scaleY(1.15);transform-origin:0 0;">1.3973</div>
<div class="a s" style="right:9px;top:77px;color:#ffff00;transform:scaleY(1.15);transform-origin:0 0;">1329</div>
<div class="a s" style="left:794px;top:97px;color:#fff;">买入</div>
<div class="a s" style="left:856px;top:97px;color:#00ff00;transform:scaleY(1.15);transform-origin:0 0;">1.3971</div>
<div class="a s" style="right:9px;top:97px;color:#ffff00;transform:scaleY(1.15);transform-origin:0 0;">0</div>
<div class="a s" style="left:794px;top:118.5px;color:#fff;">最新</div>
<div class="a s" style="right:130px;top:118.5px;color:#00ff00;transform:scaleY(1.15);transform-origin:0 0;">1.3971</div>
<div class="a s" style="left:915px;top:118.5px;color:#fff;">均价</div>
<div class="a s" style="right:9px;top:118.5px;color:#fff;transform:scaleY(1.15);transform-origin:0 0;">0.0000</div>
<div class="a s" style="left:794px;top:138.5px;color:#fff;">涨跌</div>
<div class="a s" style="right:130px;top:138.5px;color:#00ff00;transform:scaleY(1.15);transform-origin:0 0;">-0.0060</div>
<div class="a s" style="left:915px;top:138.5px;color:#fff;">昨收</div>
<div class="a s" style="right:9px;top:138.5px;color:#fff;transform:scaleY(1.15);transform-origin:0 0;">1.4031</div>
<div class="a s" style="left:794px;top:158.5px;color:#fff;">幅度</div>
<div class="a s" style="right:130px;top:158.5px;color:#00ff00;transform:scaleY(1.15);transform-origin:0 0;">-0.43%</div>
<div class="a s" style="left:915px;top:158.5px;color:#fff;">开盘</div>
<div class="a s" style="right:9px;top:158.5px;color:#ff3030;transform:scaleY(1.15);transform-origin:0 0;">1.4043</div>
<div class="a s" style="left:794px;top:178.5px;color:#fff;">总手</div>
<div class="a s" style="right:130px;top:178.5px;color:#ffff00;transform:scaleY(1.15);transform-origin:0 0;">0</div>
<div class="a s" style="left:915px;top:178.5px;color:#fff;">最高</div>
<div class="a s" style="right:9px;top:178.5px;color:#ff3030;transform:scaleY(1.15);transform-origin:0 0;">1.4083</div>
<div class="a s" style="left:794px;top:198.5px;color:#fff;">现手</div>
<div class="a s" style="right:130px;top:198.5px;color:#ffff00;transform:scaleY(1.15);transform-origin:0 0;">0</div>
<div class="a s" style="left:915px;top:198.5px;color:#fff;">最低</div>
<div class="a s" style="right:9px;top:198.5px;color:#00ff00;transform:scaleY(1.15);transform-origin:0 0;">1.3918</div>
<div class="a s" style="left:794px;top:218.5px;color:#fff;">金额</div>
<div class="a s" style="right:130px;top:218.5px;color:#ffff00;transform:scaleY(1.15);transform-origin:0 0;">0.00</div>
<div class="a s" style="left:915px;top:218.5px;color:#fff;">量比</div>
<div class="a s" style="right:9px;top:218.5px;color:#fff;transform:scaleY(1.15);transform-origin:0 0;">1.00</div>
<div class="a s" style="left:794px;top:239px;color:#fff;">外盘</div>
<div class="a s" style="right:130px;top:239px;color:#ff3030;transform:scaleY(1.15);transform-origin:0 0;">---</div>
<div class="a s" style="left:915px;top:239px;color:#fff;">内盘</div>
<div class="a s" style="right:9px;top:239px;color:#00ff00;transform:scaleY(1.15);transform-origin:0 0;">---</div>
<div class="a s" style="left:794px;top:261px;color:#a0a0a0;">北京</div>
<div class="a s" style="left:891px;top:261px;color:#a0a0a0;">价格</div>
<div class="a s" style="left:974px;top:261px;color:#a0a0a0;">现手</div>
<div class="a s" style="left:794px;top:284px;color:#fff;font-size:13px">12:24</div>
<div class="a s" style="right:107px;top:284px;color:#00ff00;font-size:13px">1.3968</div>
<div class="a s" style="right:25px;top:284px;color:#fff;font-size:13px">0</div>
<div class="a s" style="left:794px;top:306px;color:#fff;font-size:13px">12:24</div>
<div class="a s" style="right:107px;top:306px;color:#00ff00;font-size:13px">1.3966</div>
<div class="a s" style="right:25px;top:306px;color:#00ff00;font-size:13px">0</div>
<div class="a s" style="left:794px;top:328px;color:#fff;font-size:13px">12:24</div>
<div class="a s" style="right:107px;top:328px;color:#00ff00;font-size:13px">1.3967</div>
<div class="a s" style="right:25px;top:328px;color:#fff;font-size:13px">0</div>
<div class="a s" style="left:794px;top:350px;color:#fff;font-size:13px">12:25</div>
<div class="a s" style="right:107px;top:350px;color:#00ff00;font-size:13px">1.3966</div>
<div class="a s" style="right:25px;top:350px;color:#00ff00;font-size:13px">0</div>
<div class="a s" style="left:794px;top:372px;color:#fff;font-size:13px">12:26</div>
<div class="a s" style="right:107px;top:372px;color:#00ff00;font-size:13px">1.3967</div>
<div class="a s" style="right:25px;top:372px;color:#fff;font-size:13px">0</div>
<div class="a s" style="left:794px;top:394px;color:#fff;font-size:13px">12:26</div>
<div class="a s" style="right:107px;top:394px;color:#00ff00;font-size:13px">1.3967</div>
<div class="a s" style="right:25px;top:394px;color:#00ff00;font-size:13px">0</div>
<div class="a s" style="left:794px;top:416px;color:#fff;font-size:13px">12:26</div>
<div class="a s" style="right:107px;top:416px;color:#00ff00;font-size:13px">1.3966</div>
<div class="a s" style="right:25px;top:416px;color:#00ff00;font-size:13px">0</div>
<div class="a s" style="left:794px;top:438px;color:#fff;font-size:13px">12:26</div>
<div class="a s" style="right:107px;top:438px;color:#00ff00;font-size:13px">1.3967</div>
<div class="a s" style="right:25px;top:438px;color:#fff;font-size:13px">0</div>
<div class="a s" style="left:794px;top:460px;color:#fff;font-size:13px">12:27</div>
<div class="a s" style="right:107px;top:460px;color:#00ff00;font-size:13px">1.3968</div>
<div class="a s" style="right:25px;top:460px;color:#00ff00;font-size:13px">0</div>
<div class="a s" style="left:794px;top:482px;color:#fff;font-size:13px">12:27</div>
<div class="a s" style="right:107px;top:482px;color:#00ff00;font-size:13px">1.3967</div>
<div class="a s" style="right:25px;top:482px;color:#fff;font-size:13px">0</div>
<div class="a s" style="left:794px;top:504px;color:#fff;font-size:13px">12:27</div>
<div class="a s" style="right:107px;top:504px;color:#00ff00;font-size:13px">1.3968</div>
<div class="a s" style="right:25px;top:504px;color:#fff;font-size:13px">0</div>
<div class="a s" style="left:794px;top:526px;color:#fff;font-size:13px">12:28</div>
<div class="a s" style="right:107px;top:526px;color:#00ff00;font-size:13px">1.3967</div>
<div class="a s" style="right:25px;top:526px;color:#00ff00;font-size:13px">0</div>
<div class="a s" style="left:794px;top:548px;color:#fff;font-size:13px">12:28</div>
<div class="a s" style="right:107px;top:548px;color:#00ff00;font-size:13px">1.3966</div>
<div class="a s" style="right:25px;top:548px;color:#fff;font-size:13px">0</div>
<div class="a s" style="left:794px;top:570px;color:#fff;font-size:13px">12:28</div>
<div class="a s" style="right:107px;top:570px;color:#00ff00;font-size:13px">1.3967</div>
<div class="a s" style="right:25px;top:570px;color:#00ff00;font-size:13px">0</div>
<div class="a s" style="left:794px;top:592px;color:#fff;font-size:13px">12:28</div>
<div class="a s" style="right:107px;top:592px;color:#00ff00;font-size:13px">1.3968</div>
<div class="a s" style="right:25px;top:592px;color:#fff;font-size:13px">0</div>
<div class="a s" style="left:794px;top:614px;color:#fff;font-size:13px">12:28</div>
<div class="a s" style="right:107px;top:614px;color:#00ff00;font-size:13px">1.3969</div>
<div class="a s" style="right:25px;top:614px;color:#fff;font-size:13px">0</div>
<div class="a s" style="left:794px;top:636px;color:#fff;font-size:13px">12:28</div>
<div class="a s" style="right:107px;top:636px;color:#00ff00;font-size:13px">1.3967</div>
<div class="a s" style="right:25px;top:636px;color:#00ff00;font-size:13px">0</div>
<div class="a s" style="left:794px;top:658px;color:#fff;font-size:13px">12:28</div>
<div class="a s" style="right:107px;top:658px;color:#00ff00;font-size:13px">1.3968</div>
<div class="a s" style="right:25px;top:658px;color:#fff;font-size:13px">0</div>
<div class="a s" style="left:794px;top:680px;color:#fff;font-size:13px">12:28</div>
<div class="a s" style="right:107px;top:680px;color:#00ff00;font-size:13px">1.3969</div>
<div class="a s" style="right:25px;top:680px;color:#fff;font-size:13px">0</div>
<div class="a s" style="left:794px;top:702px;color:#fff;font-size:13px">12:28</div>
<div class="a s" style="right:107px;top:702px;color:#00ff00;font-size:13px">1.3970</div>
<div class="a s" style="right:25px;top:702px;color:#fff;font-size:13px">0</div>
<div class="a s" style="left:794px;top:724px;color:#fff;font-size:13px">12:28</div>
<div class="a s" style="right:107px;top:724px;color:#00ff00;font-size:13px">1.3971</div>
<div class="a s" style="right:25px;top:724px;color:#fff;font-size:13px">0</div>
<svg class="a" style="left:0;top:0" width="1024" height="768"><rect x="843" y="296" width="83" height="283" fill="#7a88e0"/><rect x="844" y="297" width="81" height="20" fill="#8898e4"/><rect x="846" y="317" width="77" height="259" fill="#f6f2de"/><rect x="909" y="302" width="11" height="11" fill="#b07888" stroke="#d8b8c0" stroke-width="0.8"/><path d="M911.5,304.5 L917.5,310.5 M917.5,304.5 L911.5,310.5" stroke="#fff" stroke-width="2"/><g transform="translate(859,330)"><path d="M-6,-6 L5,5" stroke="#101010" stroke-width="1.1"/></g><g transform="translate(885,330)"><path d="M-5,-6 L5,4" stroke="#101010" stroke-width="1.1"/><rect x="-6.5" y="-7.5" width="2.5" height="2.5" fill="#101010"/><rect x="4" y="3" width="2.5" height="2.5" fill="#101010"/></g><g transform="translate(911,330)"><path d="M-6,-4 L3,5 M-2,-7 L6,1" stroke="#101010" stroke-width="1.1"/></g><g transform="translate(859,356)" shape-rendering="crispEdges"><rect x="-7" y="0" width="14" height="1" fill="#101010"/><rect x="-7" y="-2" width="1" height="5" fill="#101010"/></g><g transform="translate(885,356)" shape-rendering="crispEdges"><rect x="0" y="-7" width="1" height="14" fill="#101010"/><rect x="-1" y="-7" width="3" height="1" fill="#101010"/></g><g transform="translate(911,356)"><rect x="-5.5" y="-3.5" width="10" height="7" fill="none" stroke="#101010" stroke-width="1"/></g><g transform="translate(859,382)"><path d="M-5,5 L5,-5" stroke="#101010" stroke-width="1.1"/><rect x="-6.5" y="3.5" width="2.5" height="2.5" fill="#101010"/></g><g transform="translate(885,382)"><path d="M-5,-5 L5,5" stroke="#101010" stroke-width="1.1"/><rect x="-6.5" y="-6.5" width="2.5" height="2.5" fill="#101010"/></g><g transform="translate(911,382)"><path d="M-5,1 C-5,-7 0,-7 0,0 C0,7 5,7 5,-1" stroke="#101010" stroke-width="1.1" fill="none"/></g><g transform="translate(859,408)"><path d="M-5.5,-3.5 L1,-3.5 A3.5,3.5 0 0 1 1,3.5 L-5.5,3.5" stroke="#101010" stroke-width="1.1" fill="none"/></g><g transform="translate(885,408)"><path d="M-6,5 L6,-5 M-6,5 L6,0 M-6,5 L6,3" stroke="#1848c0" stroke-width="1" fill="none"/><rect x="-6" y="5" width="13" height="1" fill="#101010"/></g><g transform="translate(911,408)"><path d="M-5,5 L-1,-6 M-5,5 L3,-5 M-5,5 L6,-3 M-5,5 L6,1 M-5,5 L6,4" stroke="#1848c0" stroke-width="1" fill="none"/><rect x="-6" y="-6" width="1" height="12" fill="#101010"/><rect x="-6" y="5" width="13" height="1" fill="#101010"/></g><g transform="translate(859,434)" shape-rendering="crispEdges"><rect x="-7" y="-6" width="14" height="1" fill="#101010"/><rect x="-1" y="-4" width="8" height="1" fill="#1848c0"/><rect x="-1" y="-2" width="8" height="1" fill="#1848c0"/><rect x="-1" y="0" width="8" height="1" fill="#1848c0"/><rect x="-7" y="2" width="14" height="1" fill="#1848c0"/><rect x="-7" y="4" width="14" height="1" fill="#1848c0"/><rect x="-7" y="6" width="14" height="1" fill="#101010"/></g><g transform="translate(859,434)"><text x="-7.5" y="1" font-size="8" font-family="Liberation Sans" font-weight="bold" fill="#1848c0">G</text></g><g transform="translate(885,434)" shape-rendering="crispEdges"><rect x="-7" y="-6" width="14" height="1" fill="#101010"/><rect x="-1" y="-4" width="8" height="1" fill="#1848c0"/><rect x="-1" y="-2" width="8" height="1" fill="#1848c0"/><rect x="-1" y="0" width="8" height="1" fill="#1848c0"/><rect x="-7" y="2" width="14" height="1" fill="#1848c0"/><rect x="-7" y="4" width="14" height="1" fill="#1848c0"/><rect x="-7" y="6" width="14" height="1" fill="#101010"/></g><g transform="translate(885,434)"><text x="-7.5" y="1" font-size="8" font-family="Liberation Sans" font-weight="bold" fill="#1848c0">%</text></g><g transform="translate(911,434)" shape-rendering="crispEdges"><rect x="-7" y="-6" width="14" height="1" fill="#101010"/><rect x="-1" y="-4" width="8" height="1" fill="#1848c0"/><rect x="-1" y="-2" width="8" height="1" fill="#1848c0"/><rect x="-1" y="0" width="8" height="1" fill="#1848c0"/><rect x="-7" y="2" width="14" height="1" fill="#1848c0"/><rect x="-7" y="4" width="14" height="1" fill="#1848c0"/><rect x="-7" y="6" width="14" height="1" fill="#101010"/></g><g transform="translate(911,434)"><text x="-7.5" y="1" font-size="8" font-family="Liberation Sans" font-weight="bold" fill="#1848c0">%</text></g><g transform="translate(859,460)" shape-rendering="crispEdges"><rect x="-6" y="-5" width="1" height="11" fill="#1848c0"/><rect x="-3" y="-5" width="1" height="11" fill="#101010"/><rect x="0" y="-5" width="1" height="11" fill="#101010"/><rect x="3" y="-5" width="1" height="11" fill="#101010"/></g><g transform="translate(885,460)" shape-rendering="crispEdges"><rect x="-7" y="-5" width="1" height="11" fill="#1848c0"/><rect x="-4" y="-5" width="1" height="11" fill="#101010"/><rect x="-1" y="-5" width="1" height="11" fill="#101010"/><rect x="2" y="-5" width="1" height="11" fill="#101010"/><rect x="5" y="-5" width="1" height="11" fill="#101010"/></g><g transform="translate(911,460)"><rect x="-6" y="-5" width="1" height="11" fill="#101010"/><rect x="5" y="-5" width="1" height="11" fill="#101010"/><path d="M-5,0 L5,-4 M-5,4 L5,0" stroke="#1848c0" stroke-width="1.1" fill="none"/></g><g transform="translate(859,486)"><rect x="-4" y="-6" width="1" height="12" fill="#101010"/><rect x="1" y="-6" width="1" height="12" fill="#101010"/><path d="M-7,-1 L5,-5 M-7,3 L5,-1 M-7,6 L5,2" stroke="#1848c0" stroke-width="1.1" fill="none"/></g><g transform="translate(885,486)"><path d="M-6,7 L0,-6 L6,7 M-3.5,2 L3.5,2" stroke="#e08020" stroke-width="2.4" fill="none"/><path d="M-6,7 L0,-6 L6,7 M-3.5,2 L3.5,2" stroke="#1848c0" stroke-width="1.3" fill="none"/></g><g transform="translate(911,486)"><circle r="6.5" fill="#d8d8e0" stroke="#4050b0" stroke-width="1.2"/><circle r="4" fill="#f0f0f0" stroke="#e02020" stroke-width="1.6" stroke-dasharray="1.5,1"/></g><g transform="translate(859,512)"><path d="M0,-5.5 L5.5,0 L2.5,0 L2.5,5 L-2.5,5 L-2.5,0 L-5.5,0 Z" fill="#f04018" stroke="#101010" stroke-width="1"/></g><g transform="translate(885,512)"><path d="M5,-5 L5,2 L3,0 L-2,5 L-5,2 L0,-3 L-2,-5 Z" fill="#f02010" stroke="#101010" stroke-width="1"/></g><g transform="translate(911,512)"><path d="M-5,-5 L-5,2 L-3,0 L2,5 L5,2 L0,-3 L2,-5 Z" fill="#f02010" stroke="#101010" stroke-width="1"/></g><g transform="translate(859,538)"><path d="M0,5.5 L5.5,0 L2.5,0 L2.5,-5 L-2.5,-5 L-2.5,0 L-5.5,0 Z" fill="#58b030" stroke="#101010" stroke-width="1"/></g><g transform="translate(885,538)"><path d="M5,5 L5,-2 L3,0 L-2,-5 L-5,-2 L0,3 L-2,5 Z" fill="#58b030" stroke="#101010" stroke-width="1"/></g><g transform="translate(911,538)"><path d="M-5,5 L-5,-2 L-3,0 L2,-5 L5,-2 L0,3 L2,5 Z" fill="#58b030" stroke="#101010" stroke-width="1"/></g><g transform="translate(859,564)"><path d="M-6,3 L0,-3 L5,-3 L-1,3 Z" fill="#f8e010" stroke="#101010" stroke-width="0.9"/><path d="M-6,3 L-1,3 L-1,5 L-6,5 Z" fill="#e8c800" stroke="#101010" stroke-width="0.9"/><path d="M5,-3 L5,-1 L-1,5" stroke="#101010" stroke-width="0.9" fill="none"/><rect x="1" y="2" width="4" height="3" fill="#808080"/></g><g transform="translate(897,564)"><path d="M-6,-1 L1,-1 M-3,-4 L-6,-1 L-3,2" stroke="#1850c8" stroke-width="2.2" fill="none"/><rect x="-6" y="3" width="7" height="3" fill="#f04010"/><rect x="2" y="-6" width="4" height="2" fill="#101010"/><rect x="2" y="-3" width="4" height="2.5" fill="#f04010"/><rect x="2" y="1" width="4" height="1" fill="#101010"/><rect x="2" y="3" width="4" height="1" fill="#101010"/><rect x="2" y="5" width="4" height="1" fill="#101010"/></g></svg>
<div class="a s" style="left:847px;top:302px;color:#fff;font-weight:bold;font-size:12px">画线</div>
<svg class="a" style="left:0;top:0" width="1024" height="768"><rect x="0" y="752" width="1024" height="16" fill="url(#dl)"/><rect x="0" y="752" width="1024" height="1" fill="#202020"/><rect x="0" y="767" width="1024" height="1" fill="#7070b0"/></svg>
<div class="a s" style="left:2px;top:755px;color:#1010f0;font-size:12px;font-weight:bold">沪</div>
<div class="a s" style="left:25px;top:755px;color:#f01818;font-size:12px;font-weight:bold;font-size:12px;top:755px">3142.81</div>
<div class="a s" style="left:92px;top:755px;color:#f01818;font-size:12px;font-weight:bold;font-size:12px;top:755px">13.31</div>
<div class="a s" style="left:124px;top:755px;color:#101010;font-size:12px;font-weight:bold;font-size:12px;top:755px">1786.2亿</div>
<div class="a s" style="left:188px;top:755px;color:#1010f0;font-size:12px;font-weight:bold">深</div>
<div class="a s" style="left:207px;top:755px;color:#109010;font-size:12px;font-weight:bold;font-size:12px;top:755px">13720.44</div>
<div class="a s" style="left:275px;top:755px;color:#109010;font-size:12px;font-weight:bold;font-size:12px;top:755px">-12.92</div>
<div class="a s" style="left:313px;top:755px;color:#101010;font-size:12px;font-weight:bold;font-size:12px;top:755px">1256.3亿</div>
<div class="a s" style="left:372px;top:755px;color:#101010;font-size:12px;font-weight:bold">|:</div>
<div class="a s" style="left:385px;top:755px;color:#101010;font-size:12px;">德意志银行把香格里拉(0069.HK)评级上调至买入...</div>
<div class="a s" style="left:689px;top:755px;color:#101010;font-size:12px;font-weight:bold"><span style="display:inline-block;width:8px;overflow:hidden;text-indent:-4px">〖</span></div>
<div class="a s" style="left:695px;top:755px;color:#101010;font-size:12px;">能源化工</div>
<div class="a s" style="left:743px;top:755px;color:#101010;font-size:12px;font-weight:bold"><span style="display:inline-block;width:8px;overflow:hidden;text-indent:-1px">〗</span></div>
<div class="a s" style="left:755px;top:755px;color:#101010;font-size:12px;">1</div>
<div class="a s" style="left:763px;top:755px;color:#101010;font-size:12px;">1</div>
<div class="a s" style="left:771px;top:755px;color:#101010;font-size:12px;">月</div>
<div class="a s" style="left:786px;top:755px;color:#101010;font-size:12px;">8</div>
<div class="a s" style="left:792px;top:755px;color:#101010;font-size:12px;">日玉皇盛</div>
<svg class="a" style="left:0;top:0" width="1024" height="768"><rect x="833" y="753" width="82" height="15" fill="#0000f0"/><rect x="915" y="753" width="109" height="14" fill="url(#dl)"/><rect x="916" y="753" width="1" height="15" fill="#a0a0b0"/><rect x="955" y="753" width="1" height="15" fill="#a0a0b0"/><rect x="987" y="753" width="1" height="15" fill="#a0a0b0"/><path d="M837,766 L843.5,755 L850,766 Z" fill="#ffff00"/><path d="M962,755 L972,755 L968,760 L968,766 L966,766 L966,760 Z" fill="#0000f0"/><rect x="970" y="763" width="2" height="3" fill="#0000f0"/><rect x="974" y="760" width="2" height="6" fill="#0000f0"/><rect x="978" y="757" width="2" height="9" fill="#0000f0"/></svg>
<div class="a s" style="left:852px;top:755px;color:#ffff00;font-size:12px;font-weight:bold;font-size:12px;top:755px">1</div>
<div class="a s" style="left:920px;top:755px;color:#1010d0;font-size:12px;font-weight:bold;font-size:14px;top:752px">po<span style="color:#f01818">b</span>o</div>
<div class="a s" style="left:989px;top:755px;color:#1010f0;font-size:12px;font-size:14px;top:753px">13:29</div>
</body></html>
